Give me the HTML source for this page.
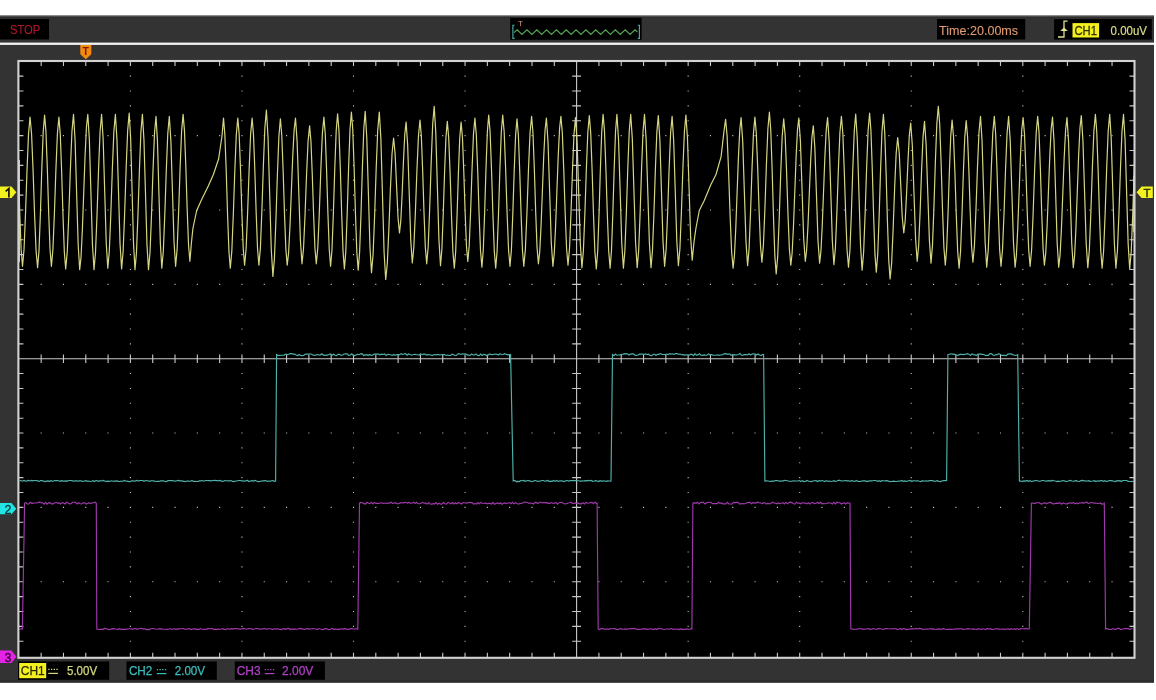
<!DOCTYPE html>
<html><head><meta charset="utf-8"><title>Oscilloscope</title>
<style>
html,body{margin:0;padding:0;background:#fff;overflow:hidden;width:1156px;height:700px}
svg{display:block;will-change:transform}
text{font-family:"Liberation Sans",sans-serif}
</style></head><body>
<svg width="1156" height="700" viewBox="0 0 1156 700">
<rect x="0" y="0" width="1156" height="700" fill="#ffffff"/>
<rect x="0" y="15" width="1154" height="667.6" fill="#333333"/>
<rect x="0" y="15" width="1154" height="1" fill="#8c8c8c"/>
<rect x="0" y="16" width="1154" height="1" fill="#4c4c4c"/>
<rect x="0" y="17" width="1154" height="1.2" fill="#2e2e2e"/>
<rect x="0" y="680.4" width="1154" height="2.2" fill="#2c2c2c"/>
<rect x="0" y="42.6" width="1154" height="2.3" fill="#f2f2f2"/>
<rect x="0" y="19" width="49" height="20.5" fill="#000"/>
<text x="10" y="33.8" font-size="12.5" fill="#b0182a" stroke="#b0182a" stroke-width="0.1" textLength="30.3" lengthAdjust="spacingAndGlyphs">STOP</text>
<rect x="510.2" y="17.8" width="131.4" height="22" fill="#000"/>
<polyline fill="none" stroke="#56a858" stroke-width="1.1" points="514,32.6 517.1,29.8 522.01,34.4 526.93,29.8 531.84,34.4 536.75,29.8 541.66,34.4 546.58,29.8 551.49,34.4 556.4,29.8 561.31,34.4 566.23,29.8 571.14,34.4 576.05,29.8 580.96,34.4 585.88,29.8 590.79,34.4 595.7,29.8 600.61,34.4 605.52,29.8 610.44,34.4 615.35,29.8 620.26,34.4 625.17,29.8 630.09,34.4 635,29.8 637.5,32.2"/>
<path d="M514.6 25.2 H512.9 V38.4 H514.6" fill="none" stroke="#48b4ac" stroke-width="1.1"/>
<path d="M637.8 25.2 H639.4 V38.4 H637.8" fill="none" stroke="#48b4ac" stroke-width="1.1"/>
<text x="517.9" y="26" font-size="8" fill="#dc9a86">T</text>
<rect x="937" y="19" width="88.2" height="20.5" fill="#000"/>
<text x="939.1" y="34.7" font-size="12.5" fill="#e49c70" stroke="#e49c70" stroke-width="0.08" textLength="79" lengthAdjust="spacingAndGlyphs">Time:20.00ms</text>
<rect x="1054.1" y="19.1" width="97.7" height="20.5" fill="#000"/>
<path d="M1058 37 H1064 V21.2 H1067.6" fill="none" stroke="#e2e28a" stroke-width="1.3"/>
<path d="M1060.2 31 L1064 27.6 L1067.8 31 Z" fill="#e2e28a"/>
<rect x="1072.5" y="23.1" width="26.6" height="14.4" fill="#f4f020"/>
<text x="1074.5" y="34.7" font-size="12" fill="#303000" stroke="#303000" stroke-width="0.3" textLength="22.5" lengthAdjust="spacingAndGlyphs">CH1</text>
<text x="1110.6" y="34.7" font-size="12" fill="#dada86" stroke="#dada86" stroke-width="0.2" textLength="36.4" lengthAdjust="spacingAndGlyphs">0.00uV</text>
<rect x="18.4" y="61.0" width="1116.1" height="596.8" fill="#000"/>
<path fill="#bdbdbd" d="M129.85 75.62h1.1v1.1h-1.1zM129.85 90.49h1.1v1.1h-1.1zM129.85 105.36h1.1v1.1h-1.1zM129.85 120.23h1.1v1.1h-1.1zM129.85 149.97h1.1v1.1h-1.1zM129.85 164.84h1.1v1.1h-1.1zM129.85 179.71h1.1v1.1h-1.1zM129.85 194.58h1.1v1.1h-1.1zM129.85 224.32h1.1v1.1h-1.1zM129.85 239.19h1.1v1.1h-1.1zM129.85 254.06h1.1v1.1h-1.1zM129.85 268.93h1.1v1.1h-1.1zM129.85 298.67h1.1v1.1h-1.1zM129.85 313.54h1.1v1.1h-1.1zM129.85 328.41h1.1v1.1h-1.1zM129.85 343.28h1.1v1.1h-1.1zM129.85 373.02h1.1v1.1h-1.1zM129.85 387.89h1.1v1.1h-1.1zM129.85 402.76h1.1v1.1h-1.1zM129.85 417.63h1.1v1.1h-1.1zM129.85 447.37h1.1v1.1h-1.1zM129.85 462.24h1.1v1.1h-1.1zM129.85 477.11h1.1v1.1h-1.1zM129.85 491.98h1.1v1.1h-1.1zM129.85 521.72h1.1v1.1h-1.1zM129.85 536.59h1.1v1.1h-1.1zM129.85 551.46h1.1v1.1h-1.1zM129.85 566.33h1.1v1.1h-1.1zM129.85 596.07h1.1v1.1h-1.1zM129.85 610.94h1.1v1.1h-1.1zM129.85 625.81h1.1v1.1h-1.1zM129.85 640.68h1.1v1.1h-1.1zM241.4 75.62h1.1v1.1h-1.1zM241.4 90.49h1.1v1.1h-1.1zM241.4 105.36h1.1v1.1h-1.1zM241.4 120.23h1.1v1.1h-1.1zM241.4 149.97h1.1v1.1h-1.1zM241.4 164.84h1.1v1.1h-1.1zM241.4 179.71h1.1v1.1h-1.1zM241.4 194.58h1.1v1.1h-1.1zM241.4 224.32h1.1v1.1h-1.1zM241.4 239.19h1.1v1.1h-1.1zM241.4 254.06h1.1v1.1h-1.1zM241.4 268.93h1.1v1.1h-1.1zM241.4 298.67h1.1v1.1h-1.1zM241.4 313.54h1.1v1.1h-1.1zM241.4 328.41h1.1v1.1h-1.1zM241.4 343.28h1.1v1.1h-1.1zM241.4 373.02h1.1v1.1h-1.1zM241.4 387.89h1.1v1.1h-1.1zM241.4 402.76h1.1v1.1h-1.1zM241.4 417.63h1.1v1.1h-1.1zM241.4 447.37h1.1v1.1h-1.1zM241.4 462.24h1.1v1.1h-1.1zM241.4 477.11h1.1v1.1h-1.1zM241.4 491.98h1.1v1.1h-1.1zM241.4 521.72h1.1v1.1h-1.1zM241.4 536.59h1.1v1.1h-1.1zM241.4 551.46h1.1v1.1h-1.1zM241.4 566.33h1.1v1.1h-1.1zM241.4 596.07h1.1v1.1h-1.1zM241.4 610.94h1.1v1.1h-1.1zM241.4 625.81h1.1v1.1h-1.1zM241.4 640.68h1.1v1.1h-1.1zM352.95 75.62h1.1v1.1h-1.1zM352.95 90.49h1.1v1.1h-1.1zM352.95 105.36h1.1v1.1h-1.1zM352.95 120.23h1.1v1.1h-1.1zM352.95 149.97h1.1v1.1h-1.1zM352.95 164.84h1.1v1.1h-1.1zM352.95 179.71h1.1v1.1h-1.1zM352.95 194.58h1.1v1.1h-1.1zM352.95 224.32h1.1v1.1h-1.1zM352.95 239.19h1.1v1.1h-1.1zM352.95 254.06h1.1v1.1h-1.1zM352.95 268.93h1.1v1.1h-1.1zM352.95 298.67h1.1v1.1h-1.1zM352.95 313.54h1.1v1.1h-1.1zM352.95 328.41h1.1v1.1h-1.1zM352.95 343.28h1.1v1.1h-1.1zM352.95 373.02h1.1v1.1h-1.1zM352.95 387.89h1.1v1.1h-1.1zM352.95 402.76h1.1v1.1h-1.1zM352.95 417.63h1.1v1.1h-1.1zM352.95 447.37h1.1v1.1h-1.1zM352.95 462.24h1.1v1.1h-1.1zM352.95 477.11h1.1v1.1h-1.1zM352.95 491.98h1.1v1.1h-1.1zM352.95 521.72h1.1v1.1h-1.1zM352.95 536.59h1.1v1.1h-1.1zM352.95 551.46h1.1v1.1h-1.1zM352.95 566.33h1.1v1.1h-1.1zM352.95 596.07h1.1v1.1h-1.1zM352.95 610.94h1.1v1.1h-1.1zM352.95 625.81h1.1v1.1h-1.1zM352.95 640.68h1.1v1.1h-1.1zM464.5 75.62h1.1v1.1h-1.1zM464.5 90.49h1.1v1.1h-1.1zM464.5 105.36h1.1v1.1h-1.1zM464.5 120.23h1.1v1.1h-1.1zM464.5 149.97h1.1v1.1h-1.1zM464.5 164.84h1.1v1.1h-1.1zM464.5 179.71h1.1v1.1h-1.1zM464.5 194.58h1.1v1.1h-1.1zM464.5 224.32h1.1v1.1h-1.1zM464.5 239.19h1.1v1.1h-1.1zM464.5 254.06h1.1v1.1h-1.1zM464.5 268.93h1.1v1.1h-1.1zM464.5 298.67h1.1v1.1h-1.1zM464.5 313.54h1.1v1.1h-1.1zM464.5 328.41h1.1v1.1h-1.1zM464.5 343.28h1.1v1.1h-1.1zM464.5 373.02h1.1v1.1h-1.1zM464.5 387.89h1.1v1.1h-1.1zM464.5 402.76h1.1v1.1h-1.1zM464.5 417.63h1.1v1.1h-1.1zM464.5 447.37h1.1v1.1h-1.1zM464.5 462.24h1.1v1.1h-1.1zM464.5 477.11h1.1v1.1h-1.1zM464.5 491.98h1.1v1.1h-1.1zM464.5 521.72h1.1v1.1h-1.1zM464.5 536.59h1.1v1.1h-1.1zM464.5 551.46h1.1v1.1h-1.1zM464.5 566.33h1.1v1.1h-1.1zM464.5 596.07h1.1v1.1h-1.1zM464.5 610.94h1.1v1.1h-1.1zM464.5 625.81h1.1v1.1h-1.1zM464.5 640.68h1.1v1.1h-1.1zM687.6 75.62h1.1v1.1h-1.1zM687.6 90.49h1.1v1.1h-1.1zM687.6 105.36h1.1v1.1h-1.1zM687.6 120.23h1.1v1.1h-1.1zM687.6 149.97h1.1v1.1h-1.1zM687.6 164.84h1.1v1.1h-1.1zM687.6 179.71h1.1v1.1h-1.1zM687.6 194.58h1.1v1.1h-1.1zM687.6 224.32h1.1v1.1h-1.1zM687.6 239.19h1.1v1.1h-1.1zM687.6 254.06h1.1v1.1h-1.1zM687.6 268.93h1.1v1.1h-1.1zM687.6 298.67h1.1v1.1h-1.1zM687.6 313.54h1.1v1.1h-1.1zM687.6 328.41h1.1v1.1h-1.1zM687.6 343.28h1.1v1.1h-1.1zM687.6 373.02h1.1v1.1h-1.1zM687.6 387.89h1.1v1.1h-1.1zM687.6 402.76h1.1v1.1h-1.1zM687.6 417.63h1.1v1.1h-1.1zM687.6 447.37h1.1v1.1h-1.1zM687.6 462.24h1.1v1.1h-1.1zM687.6 477.11h1.1v1.1h-1.1zM687.6 491.98h1.1v1.1h-1.1zM687.6 521.72h1.1v1.1h-1.1zM687.6 536.59h1.1v1.1h-1.1zM687.6 551.46h1.1v1.1h-1.1zM687.6 566.33h1.1v1.1h-1.1zM687.6 596.07h1.1v1.1h-1.1zM687.6 610.94h1.1v1.1h-1.1zM687.6 625.81h1.1v1.1h-1.1zM687.6 640.68h1.1v1.1h-1.1zM799.15 75.62h1.1v1.1h-1.1zM799.15 90.49h1.1v1.1h-1.1zM799.15 105.36h1.1v1.1h-1.1zM799.15 120.23h1.1v1.1h-1.1zM799.15 149.97h1.1v1.1h-1.1zM799.15 164.84h1.1v1.1h-1.1zM799.15 179.71h1.1v1.1h-1.1zM799.15 194.58h1.1v1.1h-1.1zM799.15 224.32h1.1v1.1h-1.1zM799.15 239.19h1.1v1.1h-1.1zM799.15 254.06h1.1v1.1h-1.1zM799.15 268.93h1.1v1.1h-1.1zM799.15 298.67h1.1v1.1h-1.1zM799.15 313.54h1.1v1.1h-1.1zM799.15 328.41h1.1v1.1h-1.1zM799.15 343.28h1.1v1.1h-1.1zM799.15 373.02h1.1v1.1h-1.1zM799.15 387.89h1.1v1.1h-1.1zM799.15 402.76h1.1v1.1h-1.1zM799.15 417.63h1.1v1.1h-1.1zM799.15 447.37h1.1v1.1h-1.1zM799.15 462.24h1.1v1.1h-1.1zM799.15 477.11h1.1v1.1h-1.1zM799.15 491.98h1.1v1.1h-1.1zM799.15 521.72h1.1v1.1h-1.1zM799.15 536.59h1.1v1.1h-1.1zM799.15 551.46h1.1v1.1h-1.1zM799.15 566.33h1.1v1.1h-1.1zM799.15 596.07h1.1v1.1h-1.1zM799.15 610.94h1.1v1.1h-1.1zM799.15 625.81h1.1v1.1h-1.1zM799.15 640.68h1.1v1.1h-1.1zM910.7 75.62h1.1v1.1h-1.1zM910.7 90.49h1.1v1.1h-1.1zM910.7 105.36h1.1v1.1h-1.1zM910.7 120.23h1.1v1.1h-1.1zM910.7 149.97h1.1v1.1h-1.1zM910.7 164.84h1.1v1.1h-1.1zM910.7 179.71h1.1v1.1h-1.1zM910.7 194.58h1.1v1.1h-1.1zM910.7 224.32h1.1v1.1h-1.1zM910.7 239.19h1.1v1.1h-1.1zM910.7 254.06h1.1v1.1h-1.1zM910.7 268.93h1.1v1.1h-1.1zM910.7 298.67h1.1v1.1h-1.1zM910.7 313.54h1.1v1.1h-1.1zM910.7 328.41h1.1v1.1h-1.1zM910.7 343.28h1.1v1.1h-1.1zM910.7 373.02h1.1v1.1h-1.1zM910.7 387.89h1.1v1.1h-1.1zM910.7 402.76h1.1v1.1h-1.1zM910.7 417.63h1.1v1.1h-1.1zM910.7 447.37h1.1v1.1h-1.1zM910.7 462.24h1.1v1.1h-1.1zM910.7 477.11h1.1v1.1h-1.1zM910.7 491.98h1.1v1.1h-1.1zM910.7 521.72h1.1v1.1h-1.1zM910.7 536.59h1.1v1.1h-1.1zM910.7 551.46h1.1v1.1h-1.1zM910.7 566.33h1.1v1.1h-1.1zM910.7 596.07h1.1v1.1h-1.1zM910.7 610.94h1.1v1.1h-1.1zM910.7 625.81h1.1v1.1h-1.1zM910.7 640.68h1.1v1.1h-1.1zM1022.25 75.62h1.1v1.1h-1.1zM1022.25 90.49h1.1v1.1h-1.1zM1022.25 105.36h1.1v1.1h-1.1zM1022.25 120.23h1.1v1.1h-1.1zM1022.25 149.97h1.1v1.1h-1.1zM1022.25 164.84h1.1v1.1h-1.1zM1022.25 179.71h1.1v1.1h-1.1zM1022.25 194.58h1.1v1.1h-1.1zM1022.25 224.32h1.1v1.1h-1.1zM1022.25 239.19h1.1v1.1h-1.1zM1022.25 254.06h1.1v1.1h-1.1zM1022.25 268.93h1.1v1.1h-1.1zM1022.25 298.67h1.1v1.1h-1.1zM1022.25 313.54h1.1v1.1h-1.1zM1022.25 328.41h1.1v1.1h-1.1zM1022.25 343.28h1.1v1.1h-1.1zM1022.25 373.02h1.1v1.1h-1.1zM1022.25 387.89h1.1v1.1h-1.1zM1022.25 402.76h1.1v1.1h-1.1zM1022.25 417.63h1.1v1.1h-1.1zM1022.25 447.37h1.1v1.1h-1.1zM1022.25 462.24h1.1v1.1h-1.1zM1022.25 477.11h1.1v1.1h-1.1zM1022.25 491.98h1.1v1.1h-1.1zM1022.25 521.72h1.1v1.1h-1.1zM1022.25 536.59h1.1v1.1h-1.1zM1022.25 551.46h1.1v1.1h-1.1zM1022.25 566.33h1.1v1.1h-1.1zM1022.25 596.07h1.1v1.1h-1.1zM1022.25 610.94h1.1v1.1h-1.1zM1022.25 625.81h1.1v1.1h-1.1zM1022.25 640.68h1.1v1.1h-1.1zM40.61 135.1h1.1v1.1h-1.1zM62.92 135.1h1.1v1.1h-1.1zM85.23 135.1h1.1v1.1h-1.1zM107.54 135.1h1.1v1.1h-1.1zM152.16 135.1h1.1v1.1h-1.1zM174.47 135.1h1.1v1.1h-1.1zM196.78 135.1h1.1v1.1h-1.1zM219.09 135.1h1.1v1.1h-1.1zM263.71 135.1h1.1v1.1h-1.1zM286.02 135.1h1.1v1.1h-1.1zM308.33 135.1h1.1v1.1h-1.1zM330.64 135.1h1.1v1.1h-1.1zM375.26 135.1h1.1v1.1h-1.1zM397.57 135.1h1.1v1.1h-1.1zM419.88 135.1h1.1v1.1h-1.1zM442.19 135.1h1.1v1.1h-1.1zM486.81 135.1h1.1v1.1h-1.1zM509.12 135.1h1.1v1.1h-1.1zM531.43 135.1h1.1v1.1h-1.1zM553.74 135.1h1.1v1.1h-1.1zM598.36 135.1h1.1v1.1h-1.1zM620.67 135.1h1.1v1.1h-1.1zM642.98 135.1h1.1v1.1h-1.1zM665.29 135.1h1.1v1.1h-1.1zM709.91 135.1h1.1v1.1h-1.1zM732.22 135.1h1.1v1.1h-1.1zM754.53 135.1h1.1v1.1h-1.1zM776.84 135.1h1.1v1.1h-1.1zM821.46 135.1h1.1v1.1h-1.1zM843.77 135.1h1.1v1.1h-1.1zM866.08 135.1h1.1v1.1h-1.1zM888.39 135.1h1.1v1.1h-1.1zM933.01 135.1h1.1v1.1h-1.1zM955.32 135.1h1.1v1.1h-1.1zM977.63 135.1h1.1v1.1h-1.1zM999.94 135.1h1.1v1.1h-1.1zM1044.56 135.1h1.1v1.1h-1.1zM1066.87 135.1h1.1v1.1h-1.1zM1089.18 135.1h1.1v1.1h-1.1zM1111.49 135.1h1.1v1.1h-1.1zM40.61 209.45h1.1v1.1h-1.1zM62.92 209.45h1.1v1.1h-1.1zM85.23 209.45h1.1v1.1h-1.1zM107.54 209.45h1.1v1.1h-1.1zM152.16 209.45h1.1v1.1h-1.1zM174.47 209.45h1.1v1.1h-1.1zM196.78 209.45h1.1v1.1h-1.1zM219.09 209.45h1.1v1.1h-1.1zM263.71 209.45h1.1v1.1h-1.1zM286.02 209.45h1.1v1.1h-1.1zM308.33 209.45h1.1v1.1h-1.1zM330.64 209.45h1.1v1.1h-1.1zM375.26 209.45h1.1v1.1h-1.1zM397.57 209.45h1.1v1.1h-1.1zM419.88 209.45h1.1v1.1h-1.1zM442.19 209.45h1.1v1.1h-1.1zM486.81 209.45h1.1v1.1h-1.1zM509.12 209.45h1.1v1.1h-1.1zM531.43 209.45h1.1v1.1h-1.1zM553.74 209.45h1.1v1.1h-1.1zM598.36 209.45h1.1v1.1h-1.1zM620.67 209.45h1.1v1.1h-1.1zM642.98 209.45h1.1v1.1h-1.1zM665.29 209.45h1.1v1.1h-1.1zM709.91 209.45h1.1v1.1h-1.1zM732.22 209.45h1.1v1.1h-1.1zM754.53 209.45h1.1v1.1h-1.1zM776.84 209.45h1.1v1.1h-1.1zM821.46 209.45h1.1v1.1h-1.1zM843.77 209.45h1.1v1.1h-1.1zM866.08 209.45h1.1v1.1h-1.1zM888.39 209.45h1.1v1.1h-1.1zM933.01 209.45h1.1v1.1h-1.1zM955.32 209.45h1.1v1.1h-1.1zM977.63 209.45h1.1v1.1h-1.1zM999.94 209.45h1.1v1.1h-1.1zM1044.56 209.45h1.1v1.1h-1.1zM1066.87 209.45h1.1v1.1h-1.1zM1089.18 209.45h1.1v1.1h-1.1zM1111.49 209.45h1.1v1.1h-1.1zM40.61 283.8h1.1v1.1h-1.1zM62.92 283.8h1.1v1.1h-1.1zM85.23 283.8h1.1v1.1h-1.1zM107.54 283.8h1.1v1.1h-1.1zM152.16 283.8h1.1v1.1h-1.1zM174.47 283.8h1.1v1.1h-1.1zM196.78 283.8h1.1v1.1h-1.1zM219.09 283.8h1.1v1.1h-1.1zM263.71 283.8h1.1v1.1h-1.1zM286.02 283.8h1.1v1.1h-1.1zM308.33 283.8h1.1v1.1h-1.1zM330.64 283.8h1.1v1.1h-1.1zM375.26 283.8h1.1v1.1h-1.1zM397.57 283.8h1.1v1.1h-1.1zM419.88 283.8h1.1v1.1h-1.1zM442.19 283.8h1.1v1.1h-1.1zM486.81 283.8h1.1v1.1h-1.1zM509.12 283.8h1.1v1.1h-1.1zM531.43 283.8h1.1v1.1h-1.1zM553.74 283.8h1.1v1.1h-1.1zM598.36 283.8h1.1v1.1h-1.1zM620.67 283.8h1.1v1.1h-1.1zM642.98 283.8h1.1v1.1h-1.1zM665.29 283.8h1.1v1.1h-1.1zM709.91 283.8h1.1v1.1h-1.1zM732.22 283.8h1.1v1.1h-1.1zM754.53 283.8h1.1v1.1h-1.1zM776.84 283.8h1.1v1.1h-1.1zM821.46 283.8h1.1v1.1h-1.1zM843.77 283.8h1.1v1.1h-1.1zM866.08 283.8h1.1v1.1h-1.1zM888.39 283.8h1.1v1.1h-1.1zM933.01 283.8h1.1v1.1h-1.1zM955.32 283.8h1.1v1.1h-1.1zM977.63 283.8h1.1v1.1h-1.1zM999.94 283.8h1.1v1.1h-1.1zM1044.56 283.8h1.1v1.1h-1.1zM1066.87 283.8h1.1v1.1h-1.1zM1089.18 283.8h1.1v1.1h-1.1zM1111.49 283.8h1.1v1.1h-1.1zM40.61 432.5h1.1v1.1h-1.1zM62.92 432.5h1.1v1.1h-1.1zM85.23 432.5h1.1v1.1h-1.1zM107.54 432.5h1.1v1.1h-1.1zM152.16 432.5h1.1v1.1h-1.1zM174.47 432.5h1.1v1.1h-1.1zM196.78 432.5h1.1v1.1h-1.1zM219.09 432.5h1.1v1.1h-1.1zM263.71 432.5h1.1v1.1h-1.1zM286.02 432.5h1.1v1.1h-1.1zM308.33 432.5h1.1v1.1h-1.1zM330.64 432.5h1.1v1.1h-1.1zM375.26 432.5h1.1v1.1h-1.1zM397.57 432.5h1.1v1.1h-1.1zM419.88 432.5h1.1v1.1h-1.1zM442.19 432.5h1.1v1.1h-1.1zM486.81 432.5h1.1v1.1h-1.1zM509.12 432.5h1.1v1.1h-1.1zM531.43 432.5h1.1v1.1h-1.1zM553.74 432.5h1.1v1.1h-1.1zM598.36 432.5h1.1v1.1h-1.1zM620.67 432.5h1.1v1.1h-1.1zM642.98 432.5h1.1v1.1h-1.1zM665.29 432.5h1.1v1.1h-1.1zM709.91 432.5h1.1v1.1h-1.1zM732.22 432.5h1.1v1.1h-1.1zM754.53 432.5h1.1v1.1h-1.1zM776.84 432.5h1.1v1.1h-1.1zM821.46 432.5h1.1v1.1h-1.1zM843.77 432.5h1.1v1.1h-1.1zM866.08 432.5h1.1v1.1h-1.1zM888.39 432.5h1.1v1.1h-1.1zM933.01 432.5h1.1v1.1h-1.1zM955.32 432.5h1.1v1.1h-1.1zM977.63 432.5h1.1v1.1h-1.1zM999.94 432.5h1.1v1.1h-1.1zM1044.56 432.5h1.1v1.1h-1.1zM1066.87 432.5h1.1v1.1h-1.1zM1089.18 432.5h1.1v1.1h-1.1zM1111.49 432.5h1.1v1.1h-1.1zM40.61 506.85h1.1v1.1h-1.1zM62.92 506.85h1.1v1.1h-1.1zM85.23 506.85h1.1v1.1h-1.1zM107.54 506.85h1.1v1.1h-1.1zM152.16 506.85h1.1v1.1h-1.1zM174.47 506.85h1.1v1.1h-1.1zM196.78 506.85h1.1v1.1h-1.1zM219.09 506.85h1.1v1.1h-1.1zM263.71 506.85h1.1v1.1h-1.1zM286.02 506.85h1.1v1.1h-1.1zM308.33 506.85h1.1v1.1h-1.1zM330.64 506.85h1.1v1.1h-1.1zM375.26 506.85h1.1v1.1h-1.1zM397.57 506.85h1.1v1.1h-1.1zM419.88 506.85h1.1v1.1h-1.1zM442.19 506.85h1.1v1.1h-1.1zM486.81 506.85h1.1v1.1h-1.1zM509.12 506.85h1.1v1.1h-1.1zM531.43 506.85h1.1v1.1h-1.1zM553.74 506.85h1.1v1.1h-1.1zM598.36 506.85h1.1v1.1h-1.1zM620.67 506.85h1.1v1.1h-1.1zM642.98 506.85h1.1v1.1h-1.1zM665.29 506.85h1.1v1.1h-1.1zM709.91 506.85h1.1v1.1h-1.1zM732.22 506.85h1.1v1.1h-1.1zM754.53 506.85h1.1v1.1h-1.1zM776.84 506.85h1.1v1.1h-1.1zM821.46 506.85h1.1v1.1h-1.1zM843.77 506.85h1.1v1.1h-1.1zM866.08 506.85h1.1v1.1h-1.1zM888.39 506.85h1.1v1.1h-1.1zM933.01 506.85h1.1v1.1h-1.1zM955.32 506.85h1.1v1.1h-1.1zM977.63 506.85h1.1v1.1h-1.1zM999.94 506.85h1.1v1.1h-1.1zM1044.56 506.85h1.1v1.1h-1.1zM1066.87 506.85h1.1v1.1h-1.1zM1089.18 506.85h1.1v1.1h-1.1zM1111.49 506.85h1.1v1.1h-1.1zM40.61 581.2h1.1v1.1h-1.1zM62.92 581.2h1.1v1.1h-1.1zM85.23 581.2h1.1v1.1h-1.1zM107.54 581.2h1.1v1.1h-1.1zM152.16 581.2h1.1v1.1h-1.1zM174.47 581.2h1.1v1.1h-1.1zM196.78 581.2h1.1v1.1h-1.1zM219.09 581.2h1.1v1.1h-1.1zM263.71 581.2h1.1v1.1h-1.1zM286.02 581.2h1.1v1.1h-1.1zM308.33 581.2h1.1v1.1h-1.1zM330.64 581.2h1.1v1.1h-1.1zM375.26 581.2h1.1v1.1h-1.1zM397.57 581.2h1.1v1.1h-1.1zM419.88 581.2h1.1v1.1h-1.1zM442.19 581.2h1.1v1.1h-1.1zM486.81 581.2h1.1v1.1h-1.1zM509.12 581.2h1.1v1.1h-1.1zM531.43 581.2h1.1v1.1h-1.1zM553.74 581.2h1.1v1.1h-1.1zM598.36 581.2h1.1v1.1h-1.1zM620.67 581.2h1.1v1.1h-1.1zM642.98 581.2h1.1v1.1h-1.1zM665.29 581.2h1.1v1.1h-1.1zM709.91 581.2h1.1v1.1h-1.1zM732.22 581.2h1.1v1.1h-1.1zM754.53 581.2h1.1v1.1h-1.1zM776.84 581.2h1.1v1.1h-1.1zM821.46 581.2h1.1v1.1h-1.1zM843.77 581.2h1.1v1.1h-1.1zM866.08 581.2h1.1v1.1h-1.1zM888.39 581.2h1.1v1.1h-1.1zM933.01 581.2h1.1v1.1h-1.1zM955.32 581.2h1.1v1.1h-1.1zM977.63 581.2h1.1v1.1h-1.1zM999.94 581.2h1.1v1.1h-1.1zM1044.56 581.2h1.1v1.1h-1.1zM1066.87 581.2h1.1v1.1h-1.1zM1089.18 581.2h1.1v1.1h-1.1zM1111.49 581.2h1.1v1.1h-1.1zM129.85 135.1h1.1v1.1h-1.1zM129.85 209.45h1.1v1.1h-1.1zM129.85 283.8h1.1v1.1h-1.1zM129.85 432.5h1.1v1.1h-1.1zM129.85 506.85h1.1v1.1h-1.1zM129.85 581.2h1.1v1.1h-1.1zM241.4 135.1h1.1v1.1h-1.1zM241.4 209.45h1.1v1.1h-1.1zM241.4 283.8h1.1v1.1h-1.1zM241.4 432.5h1.1v1.1h-1.1zM241.4 506.85h1.1v1.1h-1.1zM241.4 581.2h1.1v1.1h-1.1zM352.95 135.1h1.1v1.1h-1.1zM352.95 209.45h1.1v1.1h-1.1zM352.95 283.8h1.1v1.1h-1.1zM352.95 432.5h1.1v1.1h-1.1zM352.95 506.85h1.1v1.1h-1.1zM352.95 581.2h1.1v1.1h-1.1zM464.5 135.1h1.1v1.1h-1.1zM464.5 209.45h1.1v1.1h-1.1zM464.5 283.8h1.1v1.1h-1.1zM464.5 432.5h1.1v1.1h-1.1zM464.5 506.85h1.1v1.1h-1.1zM464.5 581.2h1.1v1.1h-1.1zM687.6 135.1h1.1v1.1h-1.1zM687.6 209.45h1.1v1.1h-1.1zM687.6 283.8h1.1v1.1h-1.1zM687.6 432.5h1.1v1.1h-1.1zM687.6 506.85h1.1v1.1h-1.1zM687.6 581.2h1.1v1.1h-1.1zM799.15 135.1h1.1v1.1h-1.1zM799.15 209.45h1.1v1.1h-1.1zM799.15 283.8h1.1v1.1h-1.1zM799.15 432.5h1.1v1.1h-1.1zM799.15 506.85h1.1v1.1h-1.1zM799.15 581.2h1.1v1.1h-1.1zM910.7 135.1h1.1v1.1h-1.1zM910.7 209.45h1.1v1.1h-1.1zM910.7 283.8h1.1v1.1h-1.1zM910.7 432.5h1.1v1.1h-1.1zM910.7 506.85h1.1v1.1h-1.1zM910.7 581.2h1.1v1.1h-1.1zM1022.25 135.1h1.1v1.1h-1.1zM1022.25 209.45h1.1v1.1h-1.1zM1022.25 283.8h1.1v1.1h-1.1zM1022.25 432.5h1.1v1.1h-1.1zM1022.25 506.85h1.1v1.1h-1.1zM1022.25 581.2h1.1v1.1h-1.1z"/>
<path fill="none" stroke="#c8c8c8" stroke-width="1.1" d="M18.4 358.7H1134.5M576.6 61V657.8M41.16 354.4V363M41.16 61v5M41.16 657.8v-5M63.47 354.4V363M63.47 61v5M63.47 657.8v-5M85.78 354.4V363M85.78 61v5M85.78 657.8v-5M108.09 354.4V363M108.09 61v5M108.09 657.8v-5M130.4 354.4V363M130.4 61v5M130.4 657.8v-5M152.71 354.4V363M152.71 61v5M152.71 657.8v-5M175.02 354.4V363M175.02 61v5M175.02 657.8v-5M197.33 354.4V363M197.33 61v5M197.33 657.8v-5M219.64 354.4V363M219.64 61v5M219.64 657.8v-5M241.95 354.4V363M241.95 61v5M241.95 657.8v-5M264.26 354.4V363M264.26 61v5M264.26 657.8v-5M286.57 354.4V363M286.57 61v5M286.57 657.8v-5M308.88 354.4V363M308.88 61v5M308.88 657.8v-5M331.19 354.4V363M331.19 61v5M331.19 657.8v-5M353.5 354.4V363M353.5 61v5M353.5 657.8v-5M375.81 354.4V363M375.81 61v5M375.81 657.8v-5M398.12 354.4V363M398.12 61v5M398.12 657.8v-5M420.43 354.4V363M420.43 61v5M420.43 657.8v-5M442.74 354.4V363M442.74 61v5M442.74 657.8v-5M465.05 354.4V363M465.05 61v5M465.05 657.8v-5M487.36 354.4V363M487.36 61v5M487.36 657.8v-5M509.67 354.4V363M509.67 61v5M509.67 657.8v-5M531.98 354.4V363M531.98 61v5M531.98 657.8v-5M554.29 354.4V363M554.29 61v5M554.29 657.8v-5M576.6 61v5M576.6 657.8v-5M598.91 354.4V363M598.91 61v5M598.91 657.8v-5M621.22 354.4V363M621.22 61v5M621.22 657.8v-5M643.53 354.4V363M643.53 61v5M643.53 657.8v-5M665.84 354.4V363M665.84 61v5M665.84 657.8v-5M688.15 354.4V363M688.15 61v5M688.15 657.8v-5M710.46 354.4V363M710.46 61v5M710.46 657.8v-5M732.77 354.4V363M732.77 61v5M732.77 657.8v-5M755.08 354.4V363M755.08 61v5M755.08 657.8v-5M777.39 354.4V363M777.39 61v5M777.39 657.8v-5M799.7 354.4V363M799.7 61v5M799.7 657.8v-5M822.01 354.4V363M822.01 61v5M822.01 657.8v-5M844.32 354.4V363M844.32 61v5M844.32 657.8v-5M866.63 354.4V363M866.63 61v5M866.63 657.8v-5M888.94 354.4V363M888.94 61v5M888.94 657.8v-5M911.25 354.4V363M911.25 61v5M911.25 657.8v-5M933.56 354.4V363M933.56 61v5M933.56 657.8v-5M955.87 354.4V363M955.87 61v5M955.87 657.8v-5M978.18 354.4V363M978.18 61v5M978.18 657.8v-5M1000.49 354.4V363M1000.49 61v5M1000.49 657.8v-5M1022.8 354.4V363M1022.8 61v5M1022.8 657.8v-5M1045.11 354.4V363M1045.11 61v5M1045.11 657.8v-5M1067.42 354.4V363M1067.42 61v5M1067.42 657.8v-5M1089.73 354.4V363M1089.73 61v5M1089.73 657.8v-5M1112.04 354.4V363M1112.04 61v5M1112.04 657.8v-5M572.2 76.17H581M18.4 76.17h5M1134.5 76.17h-5M572.2 91.04H581M18.4 91.04h5M1134.5 91.04h-5M572.2 105.91H581M18.4 105.91h5M1134.5 105.91h-5M572.2 120.78H581M18.4 120.78h5M1134.5 120.78h-5M572.2 135.65H581M18.4 135.65h5M1134.5 135.65h-5M572.2 150.52H581M18.4 150.52h5M1134.5 150.52h-5M572.2 165.39H581M18.4 165.39h5M1134.5 165.39h-5M572.2 180.26H581M18.4 180.26h5M1134.5 180.26h-5M572.2 195.13H581M18.4 195.13h5M1134.5 195.13h-5M572.2 210H581M18.4 210h5M1134.5 210h-5M572.2 224.87H581M18.4 224.87h5M1134.5 224.87h-5M572.2 239.74H581M18.4 239.74h5M1134.5 239.74h-5M572.2 254.61H581M18.4 254.61h5M1134.5 254.61h-5M572.2 269.48H581M18.4 269.48h5M1134.5 269.48h-5M572.2 284.35H581M18.4 284.35h5M1134.5 284.35h-5M572.2 299.22H581M18.4 299.22h5M1134.5 299.22h-5M572.2 314.09H581M18.4 314.09h5M1134.5 314.09h-5M572.2 328.96H581M18.4 328.96h5M1134.5 328.96h-5M572.2 343.83H581M18.4 343.83h5M1134.5 343.83h-5M18.4 358.7h5M1134.5 358.7h-5M572.2 373.57H581M18.4 373.57h5M1134.5 373.57h-5M572.2 388.44H581M18.4 388.44h5M1134.5 388.44h-5M572.2 403.31H581M18.4 403.31h5M1134.5 403.31h-5M572.2 418.18H581M18.4 418.18h5M1134.5 418.18h-5M572.2 433.05H581M18.4 433.05h5M1134.5 433.05h-5M572.2 447.92H581M18.4 447.92h5M1134.5 447.92h-5M572.2 462.79H581M18.4 462.79h5M1134.5 462.79h-5M572.2 477.66H581M18.4 477.66h5M1134.5 477.66h-5M572.2 492.53H581M18.4 492.53h5M1134.5 492.53h-5M572.2 507.4H581M18.4 507.4h5M1134.5 507.4h-5M572.2 522.27H581M18.4 522.27h5M1134.5 522.27h-5M572.2 537.14H581M18.4 537.14h5M1134.5 537.14h-5M572.2 552.01H581M18.4 552.01h5M1134.5 552.01h-5M572.2 566.88H581M18.4 566.88h5M1134.5 566.88h-5M572.2 581.75H581M18.4 581.75h5M1134.5 581.75h-5M572.2 596.62H581M18.4 596.62h5M1134.5 596.62h-5M572.2 611.49H581M18.4 611.49h5M1134.5 611.49h-5M572.2 626.36H581M18.4 626.36h5M1134.5 626.36h-5M572.2 641.23H581M18.4 641.23h5M1134.5 641.23h-5"/>
<clipPath id="gc"><rect x="19" y="62" width="1115" height="595"/></clipPath>
<g clip-path="url(#gc)"><polyline fill="none" stroke="#34340f" stroke-width="0" stroke-linejoin="round" points="15.6,115 16.98,131.82 18.36,168.51 19.74,212.79 21.12,249.48 22.5,266.3 24.01,249.71 25.52,213.53 27.03,169.87 28.54,133.69 30.05,117.1 31.56,133.83 33.07,170.33 34.58,214.37 36.09,250.87 37.6,267.6 39,250.65 40.4,213.67 41.8,169.03 43.2,132.05 44.6,115.1 45.96,131.91 47.32,168.57 48.68,212.83 50.04,249.49 51.4,266.3 52.9,249.71 54.4,213.53 55.9,169.87 57.4,133.69 58.9,117.1 60.26,133.98 61.62,170.79 62.98,215.21 64.34,252.02 65.7,268.9 67.26,251.71 68.82,214.22 70.38,168.98 71.94,131.49 73.5,114.3 75.05,139.46 76.6,191.95 78.15,244.44 79.7,269.6 81.05,256.87 82.4,228.83 83.75,191.95 85.1,155.07 86.45,127.03 87.8,114.3 89.35,139.46 90.9,191.95 92.45,244.44 94,269.6 95.52,252.34 97.04,214.68 98.56,169.22 100.08,131.56 101.6,114.3 103.15,139.21 104.7,191.2 106.25,243.19 107.8,268.1 109.32,251 110.84,213.71 112.36,168.69 113.88,131.4 115.4,114.3 116.95,139.34 118.5,191.6 120.05,243.86 121.6,268.9 123.12,251.57 124.64,213.76 126.16,168.14 127.68,130.33 129.2,113 130.65,138.37 132.1,191.3 133.55,244.23 135,269.6 136.48,252.34 137.96,214.68 139.44,169.22 140.92,131.56 142.4,114.3 143.93,139.46 145.45,191.95 146.97,244.44 148.5,269.6 150,252.56 151.5,215.38 153,170.52 154.5,133.34 156,116.3 157.45,140.89 158.9,192.2 160.35,243.51 161.8,268.1 163.3,251.22 164.8,214.41 166.3,169.99 167.8,133.18 169.3,116.3 170.88,140.6 172.45,191.3 174.03,242 175.6,266.3 177.1,249.4 178.6,212.54 180.1,168.06 181.6,131.2 183.1,114.3 184.46,130.64 185.82,166.29 187.18,209.31 188.54,244.96 189.9,261.3 191.4,243 192.9,228.5 196.7,210.5 201.9,199 208.3,186 213.4,174.5 218.6,159 222,136 223.5,118 224.86,134.69 226.22,171.09 227.58,215.01 228.94,251.41 230.3,268.1 231.8,251.41 233.3,215.01 234.8,171.09 236.3,134.69 237.8,118 239.16,134.35 240.52,170.02 241.88,213.08 243.24,248.75 244.6,265.1 246.1,248.75 247.6,213.08 249.1,170.02 250.6,134.35 252.1,118 253.46,134.35 254.82,170.02 256.18,213.08 257.54,248.75 258.9,265.1 260.4,247.86 261.9,210.25 263.4,164.85 264.9,127.24 266.4,110 268.02,136.95 269.65,193.2 271.27,249.45 272.9,276.4 274.4,258.88 275.9,220.66 277.4,174.54 278.9,136.32 280.4,118.8 281.76,135.06 283.12,170.54 284.48,213.36 285.84,248.84 287.2,265.1 288.58,253.05 289.97,226.49 291.35,191.55 292.73,156.61 294.12,130.05 295.5,118 297.12,141.62 298.75,190.9 300.38,240.18 302,263.8 303.52,248.46 305.04,214.99 306.56,174.61 308.08,141.14 309.6,125.8 310.94,141.14 312.28,174.61 313.62,214.99 314.96,248.46 316.3,263.8 317.82,247.49 319.34,211.92 320.86,168.98 322.38,133.41 323.9,117.1 325.24,133.69 326.58,169.87 327.92,213.53 329.26,249.71 330.6,266.3 332,249.35 333.4,212.37 334.8,167.73 336.2,130.75 337.6,113.8 338.96,131.04 340.32,168.65 341.68,214.05 343.04,251.66 344.4,268.9 345.8,251.46 347.2,213.41 348.6,167.49 350,129.44 351.4,112 352.76,129.58 354.12,167.91 355.48,214.19 356.84,252.52 358.2,270.1 359.6,252.45 361,213.94 362.4,167.46 363.8,128.95 365.2,111.3 366.77,137.43 368.35,191.95 369.93,246.47 371.5,272.6 373.06,254.75 374.62,215.8 376.18,168.8 377.74,129.85 379.3,112 380.9,139.13 382.5,195.75 384.1,252.37 385.7,279.5 387.28,263.77 388.86,229.46 390.44,188.04 392.02,153.73 393.6,138 395.08,153.39 396.55,185.5 398.02,217.61 399.5,233 400.82,220.66 402.14,193.74 403.46,161.26 404.78,134.34 406.1,122 407.65,144.84 409.2,192.5 410.75,240.16 412.3,263 413.84,247.1 415.38,212.43 416.92,170.57 418.46,135.9 420,120 421.34,135.99 422.68,170.86 424.02,212.94 425.36,247.81 426.7,263.8 428.2,246.29 429.7,208.1 431.2,162 432.7,123.81 434.2,106.3 435.77,132.1 437.35,185.95 438.93,239.8 440.5,265.6 441.86,249.56 443.22,214.57 444.58,172.33 445.94,137.34 447.3,121.3 448.7,137.62 450.1,173.22 451.5,216.18 452.9,251.78 454.3,268.1 455.66,251.86 457.02,216.43 458.38,173.67 459.74,138.24 461.1,122 462.44,137.51 463.78,171.34 465.12,212.16 466.46,245.99 467.8,261.5 469.22,245.55 470.64,210.75 472.06,168.75 473.48,133.95 474.9,118 476.3,134.58 477.7,170.73 479.1,214.37 480.5,250.52 481.9,267.1 483.26,250.19 484.62,213.31 485.98,168.79 487.34,131.91 488.7,115 490.1,132.02 491.5,169.15 492.9,213.95 494.3,251.08 495.7,268.1 497.1,251.08 498.5,213.95 499.9,169.15 501.3,132.02 502.7,115 504.16,131.82 505.62,168.51 507.08,212.79 508.54,249.48 510,266.3 511.4,249.9 512.8,214.13 514.2,170.97 515.6,135.2 517,118.8 518.36,135.2 519.72,170.97 521.08,214.13 522.44,249.9 523.8,266.3 525.36,249.62 526.92,213.25 528.48,169.35 530.04,132.98 531.6,116.3 532.96,132.7 534.32,168.47 535.68,211.63 537.04,247.4 538.4,263.8 539.73,251.85 541.07,225.53 542.4,190.9 543.73,156.27 545.07,129.95 546.4,118 548.02,142.02 549.65,192.15 551.27,242.28 552.9,266.3 554.23,254.01 555.57,226.93 556.9,191.3 558.23,155.68 559.57,128.59 560.9,116.3 562.32,132.84 563.74,168.93 565.16,212.47 566.58,248.56 568,265.1 569.5,248.7 571,212.93 572.5,169.77 574,134 575.5,117.6 577.1,141.93 578.7,192.7 580.3,243.47 581.9,267.8 583.38,250.88 584.86,213.97 586.34,169.43 587.82,132.52 589.3,115.6 590.7,132.64 592.1,169.82 593.5,214.68 594.9,251.86 596.3,268.9 597.66,251.71 599.02,214.22 600.38,168.98 601.74,131.49 603.1,114.3 604.5,131.4 605.9,168.69 607.3,213.71 608.7,251 610.1,268.1 611.46,251 612.82,213.71 614.18,168.69 615.54,131.4 616.9,114.3 618.52,139.21 620.15,191.2 621.77,243.19 623.4,268.1 624.86,251 626.32,213.71 627.78,168.69 629.24,131.4 630.7,114.3 632.33,139.13 633.95,190.95 635.58,242.77 637.2,267.6 638.66,250.56 640.12,213.38 641.58,168.52 643.04,131.34 644.5,114.3 646.12,139.13 647.75,190.95 649.38,242.77 651,267.6 652.46,250.7 653.92,213.84 655.38,169.36 656.84,132.5 658.3,115.6 659.88,140.01 661.45,190.95 663.02,241.89 664.6,266.3 666.1,249.62 667.6,213.25 669.1,169.35 670.6,132.98 672.1,116.3 673.67,140.48 675.25,190.95 676.83,241.42 678.4,265.6 679.9,248.86 681.4,212.34 682.9,168.26 684.4,131.74 685.9,115 687.48,138.5 689.05,187.55 690.62,236.6 692.2,260.1 694,242 695.9,228.5 699.3,210.5 704.4,200.3 710.8,184.8 716,174.5 721.1,156.6 724,131 725.6,119.3 727.1,135.84 728.6,171.93 730.1,215.47 731.6,251.56 733.1,268.1 734.43,255.77 735.77,228.59 737.1,192.85 738.43,157.11 739.77,129.93 741.1,117.6 742.73,141.57 744.35,191.6 745.98,241.63 747.6,265.6 749.06,249.09 750.52,213.08 751.98,169.62 753.44,133.61 754.9,117.1 756.3,133.22 757.7,168.38 759.1,210.82 760.5,245.98 761.9,262.1 763.4,245.41 764.9,209.01 766.4,165.09 767.9,128.69 769.4,112 770.76,130 772.12,169.26 773.48,216.64 774.84,255.9 776.2,273.9 777.7,256.66 779.2,219.05 780.7,173.65 782.2,136.04 783.7,118.8 785.12,135.06 786.54,170.54 787.96,213.36 789.38,248.84 790.8,265.1 792.13,253.05 793.47,226.49 794.8,191.55 796.13,156.61 797.47,130.05 798.8,118 800.42,141.21 802.05,189.65 803.67,238.09 805.3,261.3 806.63,250.2 807.97,225.73 809.3,193.55 810.63,161.37 811.97,136.9 813.3,125.8 814.88,148.04 816.45,194.45 818.02,240.86 819.6,263.1 820.93,251.18 822.27,224.91 823.6,190.35 824.93,155.79 826.27,129.52 827.6,117.6 829.17,141.41 830.75,191.1 832.33,240.79 833.9,264.6 835.4,248.11 836.9,212.15 838.4,168.75 839.9,132.79 841.4,116.3 842.82,133.06 844.24,169.63 845.66,213.77 847.08,250.34 848.5,267.1 849.94,250.08 851.38,212.95 852.82,168.15 854.26,131.02 855.7,114 857.3,139.29 858.9,192.05 860.5,244.81 862.1,270.1 863.6,252.64 865.1,214.54 866.6,168.56 868.1,130.46 869.6,113 870.94,130.69 872.28,169.27 873.62,215.83 874.96,254.41 876.3,272.1 877.72,254.56 879.14,216.29 880.56,170.11 881.98,131.84 883.4,114.3 884.74,132.6 886.08,172.51 887.42,220.69 888.76,260.6 890.1,278.9 891.62,263.19 893.14,228.93 894.66,187.57 896.18,153.31 897.7,137.6 899.23,153.05 900.75,185.3 902.27,217.55 903.8,233 905.18,220.78 906.56,194.13 907.94,161.97 909.32,135.32 910.7,123.1 912.33,145.49 913.95,192.2 915.58,238.91 917.2,261.3 918.66,245.74 920.12,211.79 921.58,170.81 923.04,136.86 924.5,121.3 926.12,144.27 927.75,192.2 929.38,240.13 931,263.1 932.46,245.67 933.92,207.64 935.38,161.76 936.84,123.73 938.3,106.3 939.7,123.95 941.1,162.46 942.5,208.94 943.9,247.45 945.3,265.1 946.66,248.97 948.02,213.78 949.38,171.32 950.74,136.13 952.1,120 953.5,136.46 954.9,172.38 956.3,215.72 957.7,251.64 959.1,268.1 960.52,251.7 961.94,215.93 963.36,172.77 964.78,137 966.2,120.6 967.54,136.33 968.88,170.64 970.22,212.06 971.56,246.37 972.9,262.1 974.42,245.89 975.94,210.54 977.46,167.86 978.98,132.51 980.5,116.3 982.05,140.73 983.6,191.7 985.15,242.67 986.7,267.1 988.22,250.34 989.74,213.77 991.26,169.63 992.78,133.06 994.3,116.3 995.64,132.98 996.98,169.35 998.32,213.25 999.66,249.62 1001,266.3 1002.52,249.62 1004.04,213.25 1005.56,169.35 1007.08,132.98 1008.6,116.3 1010.23,140.73 1011.85,191.7 1013.48,242.67 1015.1,267.1 1016.43,254.85 1017.77,227.86 1019.1,192.35 1020.43,156.84 1021.77,129.85 1023.1,117.6 1024.5,134.13 1025.9,170.19 1027.3,213.71 1028.7,249.77 1030.1,266.3 1031.62,249.62 1033.14,213.25 1034.66,169.35 1036.18,132.98 1037.7,116.3 1039.04,132.84 1040.38,168.93 1041.72,212.47 1043.06,248.56 1044.4,265.1 1045.75,252.97 1047.1,226.25 1048.45,191.1 1049.8,155.95 1051.15,129.23 1052.5,117.1 1054.05,141.4 1055.6,192.1 1057.15,242.8 1058.7,267.1 1060.08,254.85 1061.47,227.86 1062.85,192.35 1064.23,156.84 1065.62,129.85 1067,117.6 1068.58,141.9 1070.15,192.6 1071.72,243.3 1073.3,267.6 1074.63,255.15 1075.97,227.7 1077.3,191.6 1078.63,155.5 1079.97,128.05 1081.3,115.6 1082.92,140.22 1084.55,191.6 1086.17,242.98 1087.8,267.6 1089.32,250.56 1090.84,213.38 1092.36,168.52 1093.88,131.34 1095.4,114.3 1096.74,131.4 1098.08,168.69 1099.42,213.71 1100.76,251 1102.1,268.1 1103.62,251 1105.14,213.71 1106.66,168.69 1108.18,131.4 1109.7,114.3 1111.25,139.21 1112.8,191.2 1114.35,243.19 1115.9,268.1 1117.42,251 1118.94,213.71 1120.46,168.69 1121.98,131.4 1123.5,114.3 1125.05,139.34 1126.6,191.6 1128.15,243.86 1129.7,268.9 1131.22,251.71 1132.74,214.22 1134.26,168.98 1135.78,131.49 1137.3,114.3"/><polyline fill="none" stroke="#d6d682" stroke-width="1.2" stroke-linejoin="round" points="15.6,115 16.98,131.82 18.36,168.51 19.74,212.79 21.12,249.48 22.5,266.3 24.01,249.71 25.52,213.53 27.03,169.87 28.54,133.69 30.05,117.1 31.56,133.83 33.07,170.33 34.58,214.37 36.09,250.87 37.6,267.6 39,250.65 40.4,213.67 41.8,169.03 43.2,132.05 44.6,115.1 45.96,131.91 47.32,168.57 48.68,212.83 50.04,249.49 51.4,266.3 52.9,249.71 54.4,213.53 55.9,169.87 57.4,133.69 58.9,117.1 60.26,133.98 61.62,170.79 62.98,215.21 64.34,252.02 65.7,268.9 67.26,251.71 68.82,214.22 70.38,168.98 71.94,131.49 73.5,114.3 75.05,139.46 76.6,191.95 78.15,244.44 79.7,269.6 81.05,256.87 82.4,228.83 83.75,191.95 85.1,155.07 86.45,127.03 87.8,114.3 89.35,139.46 90.9,191.95 92.45,244.44 94,269.6 95.52,252.34 97.04,214.68 98.56,169.22 100.08,131.56 101.6,114.3 103.15,139.21 104.7,191.2 106.25,243.19 107.8,268.1 109.32,251 110.84,213.71 112.36,168.69 113.88,131.4 115.4,114.3 116.95,139.34 118.5,191.6 120.05,243.86 121.6,268.9 123.12,251.57 124.64,213.76 126.16,168.14 127.68,130.33 129.2,113 130.65,138.37 132.1,191.3 133.55,244.23 135,269.6 136.48,252.34 137.96,214.68 139.44,169.22 140.92,131.56 142.4,114.3 143.93,139.46 145.45,191.95 146.97,244.44 148.5,269.6 150,252.56 151.5,215.38 153,170.52 154.5,133.34 156,116.3 157.45,140.89 158.9,192.2 160.35,243.51 161.8,268.1 163.3,251.22 164.8,214.41 166.3,169.99 167.8,133.18 169.3,116.3 170.88,140.6 172.45,191.3 174.03,242 175.6,266.3 177.1,249.4 178.6,212.54 180.1,168.06 181.6,131.2 183.1,114.3 184.46,130.64 185.82,166.29 187.18,209.31 188.54,244.96 189.9,261.3 191.4,243 192.9,228.5 196.7,210.5 201.9,199 208.3,186 213.4,174.5 218.6,159 222,136 223.5,118 224.86,134.69 226.22,171.09 227.58,215.01 228.94,251.41 230.3,268.1 231.8,251.41 233.3,215.01 234.8,171.09 236.3,134.69 237.8,118 239.16,134.35 240.52,170.02 241.88,213.08 243.24,248.75 244.6,265.1 246.1,248.75 247.6,213.08 249.1,170.02 250.6,134.35 252.1,118 253.46,134.35 254.82,170.02 256.18,213.08 257.54,248.75 258.9,265.1 260.4,247.86 261.9,210.25 263.4,164.85 264.9,127.24 266.4,110 268.02,136.95 269.65,193.2 271.27,249.45 272.9,276.4 274.4,258.88 275.9,220.66 277.4,174.54 278.9,136.32 280.4,118.8 281.76,135.06 283.12,170.54 284.48,213.36 285.84,248.84 287.2,265.1 288.58,253.05 289.97,226.49 291.35,191.55 292.73,156.61 294.12,130.05 295.5,118 297.12,141.62 298.75,190.9 300.38,240.18 302,263.8 303.52,248.46 305.04,214.99 306.56,174.61 308.08,141.14 309.6,125.8 310.94,141.14 312.28,174.61 313.62,214.99 314.96,248.46 316.3,263.8 317.82,247.49 319.34,211.92 320.86,168.98 322.38,133.41 323.9,117.1 325.24,133.69 326.58,169.87 327.92,213.53 329.26,249.71 330.6,266.3 332,249.35 333.4,212.37 334.8,167.73 336.2,130.75 337.6,113.8 338.96,131.04 340.32,168.65 341.68,214.05 343.04,251.66 344.4,268.9 345.8,251.46 347.2,213.41 348.6,167.49 350,129.44 351.4,112 352.76,129.58 354.12,167.91 355.48,214.19 356.84,252.52 358.2,270.1 359.6,252.45 361,213.94 362.4,167.46 363.8,128.95 365.2,111.3 366.77,137.43 368.35,191.95 369.93,246.47 371.5,272.6 373.06,254.75 374.62,215.8 376.18,168.8 377.74,129.85 379.3,112 380.9,139.13 382.5,195.75 384.1,252.37 385.7,279.5 387.28,263.77 388.86,229.46 390.44,188.04 392.02,153.73 393.6,138 395.08,153.39 396.55,185.5 398.02,217.61 399.5,233 400.82,220.66 402.14,193.74 403.46,161.26 404.78,134.34 406.1,122 407.65,144.84 409.2,192.5 410.75,240.16 412.3,263 413.84,247.1 415.38,212.43 416.92,170.57 418.46,135.9 420,120 421.34,135.99 422.68,170.86 424.02,212.94 425.36,247.81 426.7,263.8 428.2,246.29 429.7,208.1 431.2,162 432.7,123.81 434.2,106.3 435.77,132.1 437.35,185.95 438.93,239.8 440.5,265.6 441.86,249.56 443.22,214.57 444.58,172.33 445.94,137.34 447.3,121.3 448.7,137.62 450.1,173.22 451.5,216.18 452.9,251.78 454.3,268.1 455.66,251.86 457.02,216.43 458.38,173.67 459.74,138.24 461.1,122 462.44,137.51 463.78,171.34 465.12,212.16 466.46,245.99 467.8,261.5 469.22,245.55 470.64,210.75 472.06,168.75 473.48,133.95 474.9,118 476.3,134.58 477.7,170.73 479.1,214.37 480.5,250.52 481.9,267.1 483.26,250.19 484.62,213.31 485.98,168.79 487.34,131.91 488.7,115 490.1,132.02 491.5,169.15 492.9,213.95 494.3,251.08 495.7,268.1 497.1,251.08 498.5,213.95 499.9,169.15 501.3,132.02 502.7,115 504.16,131.82 505.62,168.51 507.08,212.79 508.54,249.48 510,266.3 511.4,249.9 512.8,214.13 514.2,170.97 515.6,135.2 517,118.8 518.36,135.2 519.72,170.97 521.08,214.13 522.44,249.9 523.8,266.3 525.36,249.62 526.92,213.25 528.48,169.35 530.04,132.98 531.6,116.3 532.96,132.7 534.32,168.47 535.68,211.63 537.04,247.4 538.4,263.8 539.73,251.85 541.07,225.53 542.4,190.9 543.73,156.27 545.07,129.95 546.4,118 548.02,142.02 549.65,192.15 551.27,242.28 552.9,266.3 554.23,254.01 555.57,226.93 556.9,191.3 558.23,155.68 559.57,128.59 560.9,116.3 562.32,132.84 563.74,168.93 565.16,212.47 566.58,248.56 568,265.1 569.5,248.7 571,212.93 572.5,169.77 574,134 575.5,117.6 577.1,141.93 578.7,192.7 580.3,243.47 581.9,267.8 583.38,250.88 584.86,213.97 586.34,169.43 587.82,132.52 589.3,115.6 590.7,132.64 592.1,169.82 593.5,214.68 594.9,251.86 596.3,268.9 597.66,251.71 599.02,214.22 600.38,168.98 601.74,131.49 603.1,114.3 604.5,131.4 605.9,168.69 607.3,213.71 608.7,251 610.1,268.1 611.46,251 612.82,213.71 614.18,168.69 615.54,131.4 616.9,114.3 618.52,139.21 620.15,191.2 621.77,243.19 623.4,268.1 624.86,251 626.32,213.71 627.78,168.69 629.24,131.4 630.7,114.3 632.33,139.13 633.95,190.95 635.58,242.77 637.2,267.6 638.66,250.56 640.12,213.38 641.58,168.52 643.04,131.34 644.5,114.3 646.12,139.13 647.75,190.95 649.38,242.77 651,267.6 652.46,250.7 653.92,213.84 655.38,169.36 656.84,132.5 658.3,115.6 659.88,140.01 661.45,190.95 663.02,241.89 664.6,266.3 666.1,249.62 667.6,213.25 669.1,169.35 670.6,132.98 672.1,116.3 673.67,140.48 675.25,190.95 676.83,241.42 678.4,265.6 679.9,248.86 681.4,212.34 682.9,168.26 684.4,131.74 685.9,115 687.48,138.5 689.05,187.55 690.62,236.6 692.2,260.1 694,242 695.9,228.5 699.3,210.5 704.4,200.3 710.8,184.8 716,174.5 721.1,156.6 724,131 725.6,119.3 727.1,135.84 728.6,171.93 730.1,215.47 731.6,251.56 733.1,268.1 734.43,255.77 735.77,228.59 737.1,192.85 738.43,157.11 739.77,129.93 741.1,117.6 742.73,141.57 744.35,191.6 745.98,241.63 747.6,265.6 749.06,249.09 750.52,213.08 751.98,169.62 753.44,133.61 754.9,117.1 756.3,133.22 757.7,168.38 759.1,210.82 760.5,245.98 761.9,262.1 763.4,245.41 764.9,209.01 766.4,165.09 767.9,128.69 769.4,112 770.76,130 772.12,169.26 773.48,216.64 774.84,255.9 776.2,273.9 777.7,256.66 779.2,219.05 780.7,173.65 782.2,136.04 783.7,118.8 785.12,135.06 786.54,170.54 787.96,213.36 789.38,248.84 790.8,265.1 792.13,253.05 793.47,226.49 794.8,191.55 796.13,156.61 797.47,130.05 798.8,118 800.42,141.21 802.05,189.65 803.67,238.09 805.3,261.3 806.63,250.2 807.97,225.73 809.3,193.55 810.63,161.37 811.97,136.9 813.3,125.8 814.88,148.04 816.45,194.45 818.02,240.86 819.6,263.1 820.93,251.18 822.27,224.91 823.6,190.35 824.93,155.79 826.27,129.52 827.6,117.6 829.17,141.41 830.75,191.1 832.33,240.79 833.9,264.6 835.4,248.11 836.9,212.15 838.4,168.75 839.9,132.79 841.4,116.3 842.82,133.06 844.24,169.63 845.66,213.77 847.08,250.34 848.5,267.1 849.94,250.08 851.38,212.95 852.82,168.15 854.26,131.02 855.7,114 857.3,139.29 858.9,192.05 860.5,244.81 862.1,270.1 863.6,252.64 865.1,214.54 866.6,168.56 868.1,130.46 869.6,113 870.94,130.69 872.28,169.27 873.62,215.83 874.96,254.41 876.3,272.1 877.72,254.56 879.14,216.29 880.56,170.11 881.98,131.84 883.4,114.3 884.74,132.6 886.08,172.51 887.42,220.69 888.76,260.6 890.1,278.9 891.62,263.19 893.14,228.93 894.66,187.57 896.18,153.31 897.7,137.6 899.23,153.05 900.75,185.3 902.27,217.55 903.8,233 905.18,220.78 906.56,194.13 907.94,161.97 909.32,135.32 910.7,123.1 912.33,145.49 913.95,192.2 915.58,238.91 917.2,261.3 918.66,245.74 920.12,211.79 921.58,170.81 923.04,136.86 924.5,121.3 926.12,144.27 927.75,192.2 929.38,240.13 931,263.1 932.46,245.67 933.92,207.64 935.38,161.76 936.84,123.73 938.3,106.3 939.7,123.95 941.1,162.46 942.5,208.94 943.9,247.45 945.3,265.1 946.66,248.97 948.02,213.78 949.38,171.32 950.74,136.13 952.1,120 953.5,136.46 954.9,172.38 956.3,215.72 957.7,251.64 959.1,268.1 960.52,251.7 961.94,215.93 963.36,172.77 964.78,137 966.2,120.6 967.54,136.33 968.88,170.64 970.22,212.06 971.56,246.37 972.9,262.1 974.42,245.89 975.94,210.54 977.46,167.86 978.98,132.51 980.5,116.3 982.05,140.73 983.6,191.7 985.15,242.67 986.7,267.1 988.22,250.34 989.74,213.77 991.26,169.63 992.78,133.06 994.3,116.3 995.64,132.98 996.98,169.35 998.32,213.25 999.66,249.62 1001,266.3 1002.52,249.62 1004.04,213.25 1005.56,169.35 1007.08,132.98 1008.6,116.3 1010.23,140.73 1011.85,191.7 1013.48,242.67 1015.1,267.1 1016.43,254.85 1017.77,227.86 1019.1,192.35 1020.43,156.84 1021.77,129.85 1023.1,117.6 1024.5,134.13 1025.9,170.19 1027.3,213.71 1028.7,249.77 1030.1,266.3 1031.62,249.62 1033.14,213.25 1034.66,169.35 1036.18,132.98 1037.7,116.3 1039.04,132.84 1040.38,168.93 1041.72,212.47 1043.06,248.56 1044.4,265.1 1045.75,252.97 1047.1,226.25 1048.45,191.1 1049.8,155.95 1051.15,129.23 1052.5,117.1 1054.05,141.4 1055.6,192.1 1057.15,242.8 1058.7,267.1 1060.08,254.85 1061.47,227.86 1062.85,192.35 1064.23,156.84 1065.62,129.85 1067,117.6 1068.58,141.9 1070.15,192.6 1071.72,243.3 1073.3,267.6 1074.63,255.15 1075.97,227.7 1077.3,191.6 1078.63,155.5 1079.97,128.05 1081.3,115.6 1082.92,140.22 1084.55,191.6 1086.17,242.98 1087.8,267.6 1089.32,250.56 1090.84,213.38 1092.36,168.52 1093.88,131.34 1095.4,114.3 1096.74,131.4 1098.08,168.69 1099.42,213.71 1100.76,251 1102.1,268.1 1103.62,251 1105.14,213.71 1106.66,168.69 1108.18,131.4 1109.7,114.3 1111.25,139.21 1112.8,191.2 1114.35,243.19 1115.9,268.1 1117.42,251 1118.94,213.71 1120.46,168.69 1121.98,131.4 1123.5,114.3 1125.05,139.34 1126.6,191.6 1128.15,243.86 1129.7,268.9 1131.22,251.71 1132.74,214.22 1134.26,168.98 1135.78,131.49 1137.3,114.3"/></g>
<path d="M19.3 160V262M1133.9 176V232" stroke="#d6d898" stroke-width="1.3" fill="none"/>
<polyline fill="none" stroke="#50b2aa" stroke-width="1.15" points="19.5,480.79 21,480.58 22.5,481.18 24,480.49 25.5,481.04 27,480.84 28.5,480.47 30,481.01 31.5,480.44 33,480.92 34.5,480.48 36,480.51 37.5,480.91 39,481.39 40.5,480.55 42,480.67 43.5,481.15 45,481.54 46.5,481.09 48,480.88 49.5,481.57 51,480.46 52.5,481.43 54,480.75 55.5,480.57 57,480.54 58.5,480.77 60,481.38 61.5,480.62 63,481.1 64.5,481.17 66,480.85 67.5,481.06 69,480.48 70.5,480.47 72,480.65 73.5,481.22 75,480.91 76.5,480.78 78,481.1 79.5,480.94 81,480.76 82.5,481.35 84,481.24 85.5,480.69 87,481.09 88.5,481.03 90,481.45 91.5,481.28 93,480.75 94.5,481.58 96,480.54 97.5,480.9 99,481.31 100.5,480.58 102,480.99 103.5,480.45 105,481.2 106.5,481.32 108,481.09 109.5,481.45 111,480.78 112.5,481.23 114,481.11 115.5,481.1 117,480.95 118.5,481.41 120,481.53 121.5,480.97 123,481.2 124.5,480.47 126,481.24 127.5,481.18 129,481.59 130.5,481.39 132,480.74 133.5,480.86 135,481.2 136.5,480.43 138,480.95 139.5,480.6 141,480.54 142.5,480.47 144,481.32 145.5,480.56 147,480.7 148.5,480.87 150,481.45 151.5,480.5 153,480.94 154.5,481.06 156,481.46 157.5,481.38 159,481.44 160.5,480.73 162,480.9 163.5,480.83 165,481.46 166.5,481.55 168,480.58 169.5,480.61 171,480.68 172.5,480.68 174,480.98 175.5,481.11 177,480.72 178.5,480.4 180,480.9 181.5,480.84 183,481.08 184.5,481.54 186,481.23 187.5,481.02 189,481.14 190.5,481.21 192,480.46 193.5,481.48 195,481.34 196.5,481.45 198,481.36 199.5,480.87 201,480.88 202.5,480.52 204,481.16 205.5,480.47 207,480.48 208.5,480.65 210,480.59 211.5,480.81 213,480.46 214.5,480.4 216,480.58 217.5,480.52 219,480.84 220.5,480.43 222,481.45 223.5,481.14 225,480.58 226.5,480.7 228,480.82 229.5,480.84 231,480.55 232.5,481.42 234,481.59 235.5,480.96 237,480.98 238.5,480.5 240,480.52 241.5,480.81 243,480.72 244.5,481.39 246,480.59 247.5,480.43 249,481.54 250.5,481.03 252,480.58 253.5,481.05 255,480.43 256.5,481.03 258,481.57 259.5,481.44 261,481.24 262.5,480.71 264,480.84 265.5,480.6 267,481.33 268.5,481.04 270,481.33 271.5,480.8 273,480.67 274.5,481.37 275.6,481 276.6,354.6 278.1,355.57 279.6,355.31 281.1,355.21 282.6,355.24 284.1,355.08 285.6,354.05 287.1,354.64 288.6,354.31 290.1,353.66 291.6,353.66 293.1,354.16 294.6,354.12 296.1,354.99 297.6,355.51 299.1,354.49 300.6,355.47 302.1,355.58 303.6,355.51 305.1,354.33 306.6,354.04 308.1,354.05 309.6,353.99 311.1,354.01 312.6,354.85 314.1,355.4 315.6,355.28 317.1,354.56 318.6,354.91 320.1,355.2 321.6,353.77 323.1,354.92 324.6,355.42 326.1,355.16 327.6,355.1 329.1,354.56 330.6,353.96 332.1,355.18 333.6,354.27 335.1,355.2 336.6,355.54 338.1,354.39 339.6,354.4 341.1,355.49 342.6,355.05 344.1,353.94 345.6,353.85 347.1,353.9 348.6,355.41 350.1,355.21 351.6,353.89 353.1,355.25 354.6,355.56 356.1,354.91 357.6,354.3 359.1,354.7 360.6,353.86 362.1,353.63 363.6,355.54 365.1,354.9 366.6,354.65 368.1,355.47 369.6,354.47 371.1,355.34 372.6,355.25 374.1,354.02 375.6,354.1 377.1,354.19 378.6,354.08 380.1,354.77 381.6,354.12 383.1,354.44 384.6,353.86 386.1,355.42 387.6,354.31 389.1,354.52 390.6,354.77 392.1,355.41 393.6,354.44 395.1,355.44 396.6,354.6 398.1,354.66 399.6,354.65 401.1,353.64 402.6,354.48 404.1,353.97 405.6,353.61 407.1,355.2 408.6,353.94 410.1,354.55 411.6,355.05 413.1,354.71 414.6,354.25 416.1,354.64 417.6,354.71 419.1,355.17 420.6,353.81 422.1,354.72 423.6,354.1 425.1,354.15 426.6,355.14 428.1,354.62 429.6,354.72 431.1,355.12 432.6,355.42 434.1,354.49 435.6,354.83 437.1,354.61 438.6,354.62 440.1,354.99 441.6,354.5 443.1,354.67 444.6,354.56 446.1,355.48 447.6,355 449.1,355.35 450.6,355.48 452.1,354.12 453.6,354.72 455.1,355.49 456.6,355.28 458.1,353.87 459.6,353.84 461.1,354.48 462.6,353.75 464.1,354.08 465.6,353.75 467.1,354.94 468.6,355.17 470.1,355.39 471.6,353.91 473.1,355.03 474.6,354.92 476.1,353.89 477.6,355.37 479.1,355.54 480.6,354.04 482.1,355.51 483.6,354.4 485.1,354.57 486.6,355.58 488.1,355.26 489.6,353.92 491.1,354.46 492.6,354.63 494.1,354.28 495.6,353.99 497.1,354.24 498.6,355.04 500.1,353.64 501.6,354.71 503.1,354.48 504.6,353.64 506.1,354.26 507.6,354.85 509.1,354.62 510.6,354.6 513.2,481 514.7,480.48 516.2,481.58 517.7,481.35 519.2,481.57 520.7,480.53 522.2,480.72 523.7,480.45 525.2,481.33 526.7,480.72 528.2,480.56 529.7,480.91 531.2,481.49 532.7,481.38 534.2,480.71 535.7,480.58 537.2,481.5 538.7,481.08 540.2,481.24 541.7,480.51 543.2,480.47 544.7,481.23 546.2,480.91 547.7,480.49 549.2,481.53 550.7,481.16 552.2,481.36 553.7,480.5 555.2,481.43 556.7,480.48 558.2,481.44 559.7,480.94 561.2,480.81 562.7,481.06 564.2,481.51 565.7,480.72 567.2,480.56 568.7,481.03 570.2,480.69 571.7,480.53 573.2,480.59 574.7,480.46 576.2,480.64 577.7,480.77 579.2,480.77 580.7,481.31 582.2,480.75 583.7,481 585.2,480.61 586.7,480.82 588.2,480.42 589.7,480.7 591.2,480.42 592.7,481.28 594.2,481.06 595.7,480.63 597.2,480.97 598.7,481.52 600.2,480.53 601.7,481.38 603.2,480.92 604.7,480.99 606.2,481.4 607.7,480.87 609.2,481.01 610.7,481.23 611,481 612.5,354.6 614,355.56 615.5,354.29 617,355.26 618.5,355.01 620,354.87 621.5,354.41 623,354.3 624.5,353.71 626,353.86 627.5,353.74 629,355.08 630.5,354.11 632,353.93 633.5,353.77 635,355.28 636.5,355.34 638,354.94 639.5,354.16 641,354.08 642.5,354.19 644,354.52 645.5,353.92 647,354.49 648.5,354.13 650,355.52 651.5,355.55 653,354.69 654.5,354.09 656,355.53 657.5,354.22 659,354.31 660.5,353.6 662,354.36 663.5,354.55 665,354.61 666.5,354 668,354.61 669.5,353.61 671,354.13 672.5,353.78 674,354.4 675.5,353.68 677,353.64 678.5,354.21 680,354.07 681.5,354.77 683,354.66 684.5,355.1 686,354.92 687.5,355.03 689,355.36 690.5,354.38 692,354.25 693.5,355.57 695,353.9 696.5,355.05 698,354.89 699.5,353.69 701,355.27 702.5,355.38 704,354.85 705.5,355.07 707,355.22 708.5,353.88 710,354.65 711.5,354.61 713,355.27 714.5,355.21 716,355.25 717.5,354.77 719,355.39 720.5,354.97 722,354.99 723.5,354.06 725,353.66 726.5,353.87 728,354.32 729.5,353.81 731,355.27 732.5,354.72 734,354.86 735.5,354.85 737,354.96 738.5,354.58 740,353.61 741.5,355.2 743,355.1 744.5,354.61 746,354.67 747.5,354.92 749,353.73 750.5,355.07 752,354.1 753.5,353.75 755,354.13 756.5,355.06 758,354.01 759.5,355.08 761,355.55 762.5,354.59 763.6,354.6 764.9,481 766.4,480.86 767.9,480.97 769.4,481.22 770.9,481.32 772.4,481.14 773.9,481.17 775.4,480.49 776.9,480.58 778.4,480.7 779.9,481.29 781.4,480.77 782.9,481.08 784.4,480.41 785.9,480.47 787.4,480.72 788.9,481.21 790.4,481.23 791.9,481.21 793.4,480.75 794.9,481.02 796.4,480.96 797.9,480.96 799.4,480.54 800.9,481.47 802.4,480.64 803.9,481.57 805.4,481.52 806.9,480.42 808.4,480.95 809.9,481.38 811.4,481.56 812.9,480.94 814.4,480.72 815.9,480.65 817.4,481.53 818.9,480.65 820.4,481.1 821.9,480.57 823.4,481.03 824.9,481.54 826.4,480.56 827.9,481.38 829.4,481.01 830.9,481.46 832.4,481.24 833.9,480.68 835.4,481.48 836.9,480.98 838.4,480.43 839.9,480.4 841.4,480.99 842.9,480.94 844.4,480.76 845.9,480.57 847.4,480.81 848.9,480.78 850.4,481.41 851.9,480.4 853.4,481.3 854.9,481.41 856.4,480.54 857.9,481.51 859.4,481.26 860.9,481.48 862.4,480.75 863.9,480.85 865.4,480.87 866.9,481.6 868.4,481.11 869.9,480.83 871.4,480.91 872.9,480.73 874.4,480.46 875.9,480.52 877.4,481.4 878.9,480.74 880.4,481.52 881.9,480.7 883.4,480.72 884.9,481.01 886.4,480.63 887.9,480.85 889.4,481.55 890.9,481.46 892.4,481.37 893.9,481.16 895.4,481.5 896.9,481.53 898.4,481.06 899.9,481.26 901.4,480.46 902.9,481.28 904.4,480.94 905.9,481.3 907.4,481.17 908.9,480.74 910.4,480.46 911.9,481.51 913.4,480.55 914.9,480.97 916.4,480.81 917.9,480.76 919.4,481.29 920.9,481.57 922.4,480.71 923.9,481.19 925.4,480.76 926.9,481.07 928.4,480.87 929.9,480.6 931.4,480.59 932.9,480.65 934.4,481.49 935.9,481 937.4,480.66 938.9,481.49 940.4,481.6 941.9,480.94 943.4,480.57 944.9,480.63 946.4,480.51 946.6,481 947.9,354.6 949.4,354.28 950.9,353.78 952.4,354.08 953.9,354.12 955.4,354.74 956.9,355.37 958.4,355.1 959.9,354.43 961.4,354.43 962.9,354.65 964.4,354.35 965.9,354.28 967.4,353.72 968.9,354.16 970.4,355.54 971.9,353.85 973.4,354.61 974.9,354.86 976.4,355.33 977.9,354.03 979.4,354.14 980.9,354.1 982.4,354.4 983.9,354.49 985.4,355.51 986.9,355.3 988.4,355.35 989.9,353.64 991.4,353.66 992.9,355.02 994.4,355.39 995.9,354.55 997.4,354.77 998.9,353.6 1000.4,354.38 1001.9,355.45 1003.4,355.25 1004.9,355.31 1006.4,355.54 1007.9,354.1 1009.4,353.82 1010.9,353.91 1012.4,354.64 1013.9,354.96 1015.4,355.48 1016.9,355.04 1017.7,354.6 1019.4,481 1020.9,481.18 1022.4,481.32 1023.9,480.95 1025.4,481.06 1026.9,480.45 1028.4,481.34 1029.9,480.68 1031.4,481.5 1032.9,481.17 1034.4,480.76 1035.9,480.55 1037.4,480.7 1038.9,481.16 1040.4,481.24 1041.9,480.53 1043.4,480.48 1044.9,481.03 1046.4,481.1 1047.9,480.87 1049.4,480.67 1050.9,481.12 1052.4,480.41 1053.9,480.76 1055.4,480.95 1056.9,481.55 1058.4,481.17 1059.9,481.46 1061.4,480.97 1062.9,480.68 1064.4,480.7 1065.9,481.55 1067.4,481.25 1068.9,480.77 1070.4,480.43 1071.9,481 1073.4,481.21 1074.9,480.9 1076.4,480.71 1077.9,481.2 1079.4,481.51 1080.9,480.67 1082.4,480.44 1083.9,480.81 1085.4,480.9 1086.9,481.22 1088.4,480.64 1089.9,481.36 1091.4,481.29 1092.9,481.01 1094.4,480.65 1095.9,481.56 1097.4,480.77 1098.9,481.38 1100.4,480.68 1101.9,480.67 1103.4,481.31 1104.9,480.75 1106.4,481.54 1107.9,480.99 1109.4,480.62 1110.9,480.67 1112.4,480.9 1113.9,481.2 1115.4,481.54 1116.9,480.58 1118.4,480.87 1119.9,480.66 1121.4,481.57 1122.9,480.57 1124.4,480.46 1125.9,480.47 1127.4,480.87 1128.9,481.48 1130.4,481.46 1131.9,481.28 1133.4,481.6"/>
<polyline fill="none" stroke="#9e3aaa" stroke-width="1.15" points="19.5,629.52 21,628.8 22.4,629 24.6,503.2 26.1,502.57 27.6,504.07 29.1,503.69 30.6,502.26 32.1,503.53 33.6,502.96 35.1,502.95 36.6,502.86 38.1,502.54 39.6,502.21 41.1,502.76 42.6,502.9 44.1,504.11 45.6,502.45 47.1,504.13 48.6,502.61 50.1,502.91 51.6,503.84 53.1,503.84 54.6,503.06 56.1,502.3 57.6,503.15 59.1,502.95 60.6,504.04 62.1,502.59 63.6,502.93 65.1,503.99 66.6,502.26 68.1,503.02 69.6,503.82 71.1,503.73 72.6,502.28 74.1,502.27 75.6,502.33 77.1,504.04 78.6,502.71 80.1,503.69 81.6,504 83.1,502.88 84.6,502.74 86.1,504.12 87.6,503.43 89.1,502.72 90.6,503.63 92.1,502.83 93.6,502.75 95.1,502.21 96.3,503.2 96.8,629 98.3,629.31 99.8,629.5 101.3,629.16 102.8,629.53 104.3,628.43 105.8,628.68 107.3,628.97 108.8,629.55 110.3,629.54 111.8,628.86 113.3,628.7 114.8,628.92 116.3,628.99 117.8,629.51 119.3,628.62 120.8,629.36 122.3,629.29 123.8,629.39 125.3,629.33 126.8,629.13 128.3,628.79 129.8,628.78 131.3,628.83 132.8,629.34 134.3,628.49 135.8,628.64 137.3,629.3 138.8,628.7 140.3,628.48 141.8,628.44 143.3,629.06 144.8,628.79 146.3,629.58 147.8,629.46 149.3,629.59 150.8,628.72 152.3,628.5 153.8,628.52 155.3,629 156.8,629.25 158.3,628.94 159.8,628.68 161.3,628.9 162.8,629.14 164.3,629.21 165.8,629.3 167.3,629.42 168.8,629.2 170.3,628.55 171.8,629.41 173.3,628.75 174.8,629.08 176.3,628.85 177.8,629.29 179.3,628.64 180.8,628.7 182.3,628.69 183.8,628.58 185.3,629.46 186.8,629.09 188.3,628.79 189.8,628.88 191.3,629.59 192.8,629.01 194.3,628.68 195.8,629.37 197.3,629.18 198.8,629.59 200.3,628.52 201.8,628.97 203.3,629.38 204.8,629.41 206.3,629.5 207.8,628.45 209.3,628.75 210.8,628.54 212.3,628.63 213.8,629.57 215.3,629.1 216.8,629.52 218.3,628.85 219.8,629.44 221.3,628.94 222.8,628.71 224.3,629.33 225.8,629.53 227.3,628.53 228.8,629.12 230.3,629.14 231.8,628.66 233.3,628.84 234.8,628.57 236.3,628.64 237.8,628.71 239.3,629.12 240.8,629.18 242.3,628.64 243.8,628.41 245.3,628.79 246.8,629.21 248.3,628.62 249.8,628.77 251.3,628.64 252.8,629.35 254.3,629.06 255.8,628.48 257.3,628.52 258.8,628.87 260.3,629.06 261.8,629.17 263.3,628.51 264.8,628.6 266.3,629.23 267.8,628.89 269.3,628.74 270.8,628.77 272.3,629.54 273.8,628.77 275.3,629.08 276.8,628.83 278.3,628.9 279.8,629.44 281.3,629.6 282.8,628.84 284.3,628.64 285.8,629.27 287.3,628.64 288.8,628.41 290.3,629.48 291.8,628.91 293.3,629.38 294.8,628.89 296.3,629.46 297.8,628.95 299.3,628.6 300.8,628.42 302.3,629.06 303.8,629.17 305.3,629.49 306.8,628.51 308.3,629.15 309.8,628.85 311.3,629.01 312.8,628.58 314.3,628.74 315.8,629.03 317.3,629.51 318.8,628.53 320.3,628.99 321.8,629.37 323.3,629.56 324.8,628.64 326.3,628.55 327.8,629.53 329.3,629.57 330.8,628.98 332.3,628.46 333.8,629.51 335.3,628.87 336.8,629.49 338.3,629.14 339.8,629.39 341.3,628.59 342.8,629.34 344.3,628.67 345.8,628.89 347.3,629.42 348.8,629.4 350.3,628.62 351.8,628.66 353.3,628.88 354.8,629.02 356.3,628.86 357.8,629 359.5,503.2 361,502.45 362.5,502.69 364,503.65 365.5,503.99 367,502.28 368.5,503.32 370,503.71 371.5,502.28 373,503.88 374.5,502.44 376,503.4 377.5,503.3 379,503.45 380.5,502.81 382,503.04 383.5,503.37 385,503.05 386.5,503.52 388,503.09 389.5,503.08 391,502.25 392.5,503.44 394,503.18 395.5,502.67 397,503.73 398.5,503.76 400,503.12 401.5,502.56 403,503.15 404.5,502.41 406,502.46 407.5,503.06 409,502.38 410.5,503.08 412,503.22 413.5,502.28 415,503.47 416.5,502.36 418,503.67 419.5,503.76 421,503.22 422.5,502.31 424,503.21 425.5,502.96 427,504.1 428.5,502.47 430,503.91 431.5,504.19 433,503.66 434.5,503.83 436,502.59 437.5,504.16 439,503.18 440.5,504.11 442,504.03 443.5,502.53 445,503.78 446.5,504.06 448,502.33 449.5,502.9 451,503.71 452.5,502.52 454,503.99 455.5,502.75 457,503.83 458.5,502.49 460,503.2 461.5,504.04 463,502.62 464.5,502.73 466,503.21 467.5,502.84 469,502.27 470.5,502.56 472,502.52 473.5,504.07 475,503.56 476.5,503.99 478,502.54 479.5,503.77 481,502.43 482.5,503.26 484,503.47 485.5,502.92 487,503.95 488.5,503.31 490,503.36 491.5,503.97 493,502.41 494.5,504.19 496,503.46 497.5,502.99 499,503.8 500.5,502.73 502,504.18 503.5,503.35 505,502.92 506.5,503.73 508,503.08 509.5,502.55 511,503.69 512.5,502.3 514,503.84 515.5,502.71 517,503.48 518.5,504.17 520,503.37 521.5,503.53 523,502.83 524.5,502.2 526,502.27 527.5,502.5 529,503.43 530.5,503.06 532,503.23 533.5,503.99 535,502.46 536.5,502.65 538,503.51 539.5,502.24 541,502.21 542.5,502.91 544,502.41 545.5,502.91 547,502.65 548.5,503.37 550,503.38 551.5,502.61 553,503.45 554.5,503.15 556,502.47 557.5,504.07 559,502.69 560.5,502.5 562,502.39 563.5,503.48 565,503.94 566.5,503.76 568,503 569.5,502.73 571,502.22 572.5,503.49 574,503.32 575.5,502.9 577,503.49 578.5,503.09 580,504.07 581.5,503.67 583,502.7 584.5,504.01 586,502.29 587.5,503.26 589,503.01 590.5,502.68 592,502.32 593.5,503.76 595,502.22 596.5,503.3 597.1,503.2 598.2,629 599.7,629.53 601.2,628.57 602.7,628.64 604.2,629.13 605.7,629.01 607.2,629.17 608.7,629.38 610.2,628.61 611.7,628.77 613.2,628.76 614.7,628.46 616.2,629.47 617.7,629.34 619.2,629.26 620.7,628.41 622.2,629.41 623.7,629.29 625.2,628.96 626.7,629.29 628.2,628.94 629.7,628.67 631.2,628.53 632.7,628.68 634.2,628.45 635.7,628.8 637.2,629.3 638.7,629.23 640.2,629.41 641.7,629.25 643.2,628.72 644.7,629.06 646.2,628.92 647.7,629.35 649.2,629.03 650.7,628.72 652.2,629.17 653.7,629.56 655.2,628.66 656.7,629.46 658.2,628.42 659.7,628.71 661.2,628.68 662.7,629.29 664.2,629.53 665.7,629.3 667.2,628.79 668.7,629.46 670.2,628.79 671.7,628.69 673.2,629.49 674.7,629.16 676.2,629.23 677.7,629.2 679.2,629.57 680.7,628.96 682.2,629.41 683.7,629.24 685.2,629.43 686.7,628.92 688.2,629.27 689.7,629.08 691.2,628.77 691.9,629 692.9,503.2 694.4,502.62 695.9,503.45 697.4,502.36 698.9,504.02 700.4,502.49 701.9,502.25 703.4,502.41 704.9,504.06 706.4,502.89 707.9,502.48 709.4,502.26 710.9,502.28 712.4,503.59 713.9,503.47 715.4,503.59 716.9,503.67 718.4,502.33 719.9,503.38 721.4,502.93 722.9,503.84 724.4,503.84 725.9,503.98 727.4,502.33 728.9,503.94 730.4,504.03 731.9,504.09 733.4,502.41 734.9,502.61 736.4,502.42 737.9,502.27 739.4,503.9 740.9,503.82 742.4,503.47 743.9,503.85 745.4,503.46 746.9,502.77 748.4,502.4 749.9,502.4 751.4,503.71 752.9,502.61 754.4,502.84 755.9,503.05 757.4,502.24 758.9,502.71 760.4,502.77 761.9,503.63 763.4,502.94 764.9,502.84 766.4,504.13 767.9,503.21 769.4,503.9 770.9,503.44 772.4,502.26 773.9,503.03 775.4,503.07 776.9,503.75 778.4,502.89 779.9,503.61 781.4,503.28 782.9,502.63 784.4,503.92 785.9,502.38 787.4,503.84 788.9,502.54 790.4,502.2 791.9,502.6 793.4,503.72 794.9,504.16 796.4,502.21 797.9,503.18 799.4,503.18 800.9,503.79 802.4,502.57 803.9,503.19 805.4,502.89 806.9,503.86 808.4,502.72 809.9,504.09 811.4,502.77 812.9,502.63 814.4,503.6 815.9,503.2 817.4,502.42 818.9,503.47 820.4,502.36 821.9,503.78 823.4,503.59 824.9,503.77 826.4,503.46 827.9,502.91 829.4,503 830.9,502.99 832.4,503.98 833.9,502.37 835.4,503.98 836.9,502.25 838.4,502.61 839.9,502.73 841.4,504 842.9,503.2 844.4,502.96 845.9,503.97 847.4,502.67 848.9,503.12 850,503.2 850.8,629 852.3,629.04 853.8,629.31 855.3,629.3 856.8,629.18 858.3,628.82 859.8,628.79 861.3,628.59 862.8,629.41 864.3,629.19 865.8,629.29 867.3,628.6 868.8,628.93 870.3,629.33 871.8,629.1 873.3,628.55 874.8,628.95 876.3,629.46 877.8,628.69 879.3,628.63 880.8,628.76 882.3,629.24 883.8,629.41 885.3,628.59 886.8,628.59 888.3,628.7 889.8,628.79 891.3,629.03 892.8,628.59 894.3,628.79 895.8,628.63 897.3,629.57 898.8,629.27 900.3,628.52 901.8,629.55 903.3,628.52 904.8,628.86 906.3,629.58 907.8,629.35 909.3,629.28 910.8,628.92 912.3,628.64 913.8,629.17 915.3,628.53 916.8,628.65 918.3,628.87 919.8,628.44 921.3,628.88 922.8,629.35 924.3,629.23 925.8,629 927.3,629.16 928.8,628.96 930.3,628.57 931.8,629.12 933.3,628.89 934.8,629.29 936.3,629.49 937.8,628.92 939.3,629.09 940.8,629.3 942.3,628.91 943.8,628.67 945.3,629.27 946.8,629.46 948.3,629.33 949.8,629.24 951.3,629.42 952.8,629.22 954.3,629.17 955.8,628.94 957.3,628.78 958.8,629.15 960.3,628.52 961.8,628.9 963.3,629.34 964.8,629.26 966.3,629.16 967.8,628.7 969.3,628.91 970.8,628.95 972.3,629.15 973.8,628.89 975.3,629.21 976.8,629.52 978.3,628.62 979.8,629.19 981.3,629.33 982.8,628.87 984.3,628.99 985.8,629.57 987.3,628.45 988.8,629.05 990.3,628.59 991.8,629.34 993.3,629.53 994.8,629.02 996.3,628.52 997.8,629.09 999.3,629.05 1000.8,629.26 1002.3,629.01 1003.8,629.17 1005.3,629.39 1006.8,629.03 1008.3,628.89 1009.8,629.54 1011.3,628.65 1012.8,629.22 1014.3,628.87 1015.8,629.32 1017.3,628.55 1018.8,629.58 1020.3,628.83 1021.8,628.47 1023.3,628.73 1024.8,628.88 1026.3,628.42 1027.8,628.9 1029.3,629 1031.4,503.2 1032.9,503.04 1034.4,503.6 1035.9,502.9 1037.4,502.73 1038.9,502.65 1040.4,503.68 1041.9,504.08 1043.4,503.25 1044.9,502.64 1046.4,503.8 1047.9,502.98 1049.4,502.62 1050.9,502.46 1052.4,503.75 1053.9,503.82 1055.4,503.47 1056.9,503.14 1058.4,503.32 1059.9,502.65 1061.4,504.13 1062.9,502.91 1064.4,503.48 1065.9,503.84 1067.4,503.83 1068.9,503.14 1070.4,502.79 1071.9,503.3 1073.4,502.45 1074.9,503.87 1076.4,502.91 1077.9,503.9 1079.4,502.73 1080.9,502.95 1082.4,502.71 1083.9,503.05 1085.4,502.57 1086.9,502.21 1088.4,503.64 1089.9,502.76 1091.4,502.69 1092.9,502.8 1094.4,503.16 1095.9,503.06 1097.4,503.47 1098.9,503.52 1100.4,502.92 1101.9,504.06 1103.4,503.91 1104.3,503.2 1105.6,629 1107.1,628.47 1108.6,629.39 1110.1,629.49 1111.6,629.34 1113.1,628.57 1114.6,629.4 1116.1,629.16 1117.6,628.42 1119.1,628.41 1120.6,629.54 1122.1,629.19 1123.6,628.7 1125.1,628.52 1126.6,628.57 1128.1,628.68 1129.6,629.33 1131.1,628.82 1132.6,628.58"/>
<rect x="18.4" y="61.0" width="1116.1" height="596.8" fill="none" stroke="#d2d2d2" stroke-width="2.1"/>
<path d="M80.3 45 H91.3 V54.3 L85.8 59.3 L80.3 54.3 Z" fill="#f58a12"/>
<text x="82.5" y="54.8" font-size="10.5" font-weight="bold" fill="#7a2200" textLength="6.4" lengthAdjust="spacingAndGlyphs">T</text>
<path d="M0 186.6 H11.5 L16.3 192.25 L11.5 197.9 H0 Z" fill="#f2f020"/>
<text x="4.4" y="197.3" font-size="12.5" fill="#101000" stroke="#101000" stroke-width="0.35"></text>
<path d="M5.6 191.4 L8.9 188.6 V197.4" stroke="#141400" stroke-width="1.7" fill="none"/>
<path d="M0 503 H11.5 L16.3 508.65 L11.5 514.3 H0 Z" fill="#22e4e4"/>
<text x="4.4" y="513.7" font-size="12.5" fill="#003838" stroke="#003838" stroke-width="0.35">2</text>
<path d="M0 650.4 H11.5 L16.3 656.65 L11.5 662.9 H0 Z" fill="#e424e4"/>
<text x="4.4" y="662.3" font-size="12.5" fill="#400040" stroke="#400040" stroke-width="0.35">3</text>
<path d="M1136.5 192.2 L1141.6 186.6 H1152.8 V197.9 H1141.6 Z" fill="#f2f020"/>
<text x="1143.6" y="196.8" font-size="11.5" fill="#202000" stroke="#202000" stroke-width="0.3">T</text>
<rect x="18" y="661.4" width="91.2" height="18.4" fill="#000"/>
<rect x="19.2" y="663" width="27" height="15.2" fill="#f4f020"/>
<text x="20.8" y="675" font-size="12" fill="#2a2a00" stroke="#2a2a00" stroke-width="0.25" textLength="23.9" lengthAdjust="spacingAndGlyphs">CH1</text>
<path d="M48.3 673.4h9.6" stroke="#d8d880" stroke-width="1.2"/>
<path d="M48.3 669.4h9.6" stroke="#d8d880" stroke-width="1.1" stroke-dasharray="1.3 1.4"/>
<text x="67" y="675" font-size="12" fill="#d6d67e" stroke="#d6d67e" stroke-width="0.25" textLength="30.1" lengthAdjust="spacingAndGlyphs">5.00V</text>
<rect x="126.5" y="661.4" width="90.3" height="18.4" fill="#000"/>
<text x="128.9" y="675.4" font-size="12" fill="#3cbcbc" stroke="#3cbcbc" stroke-width="0.25" textLength="23.5" lengthAdjust="spacingAndGlyphs">CH2</text>
<path d="M156.8 673.6h9.6" stroke="#3cbcbc" stroke-width="1.2"/>
<path d="M156.8 669.6h9.6" stroke="#3cbcbc" stroke-width="1.1" stroke-dasharray="1.3 1.4"/>
<text x="174.7" y="675.4" font-size="12" fill="#3cbcbc" stroke="#3cbcbc" stroke-width="0.25" textLength="30.4" lengthAdjust="spacingAndGlyphs">2.00V</text>
<rect x="234.8" y="661.4" width="90.1" height="18.4" fill="#000"/>
<text x="236.7" y="675.4" font-size="12" fill="#b040c4" stroke="#b040c4" stroke-width="0.25" textLength="23.9" lengthAdjust="spacingAndGlyphs">CH3</text>
<path d="M264.8 673.6h9.6" stroke="#b040c4" stroke-width="1.2"/>
<path d="M264.8 669.6h9.6" stroke="#b040c4" stroke-width="1.1" stroke-dasharray="1.3 1.4"/>
<text x="282.1" y="675.4" font-size="12" fill="#b040c4" stroke="#b040c4" stroke-width="0.25" textLength="31.2" lengthAdjust="spacingAndGlyphs">2.00V</text>
</svg>
</body></html>
